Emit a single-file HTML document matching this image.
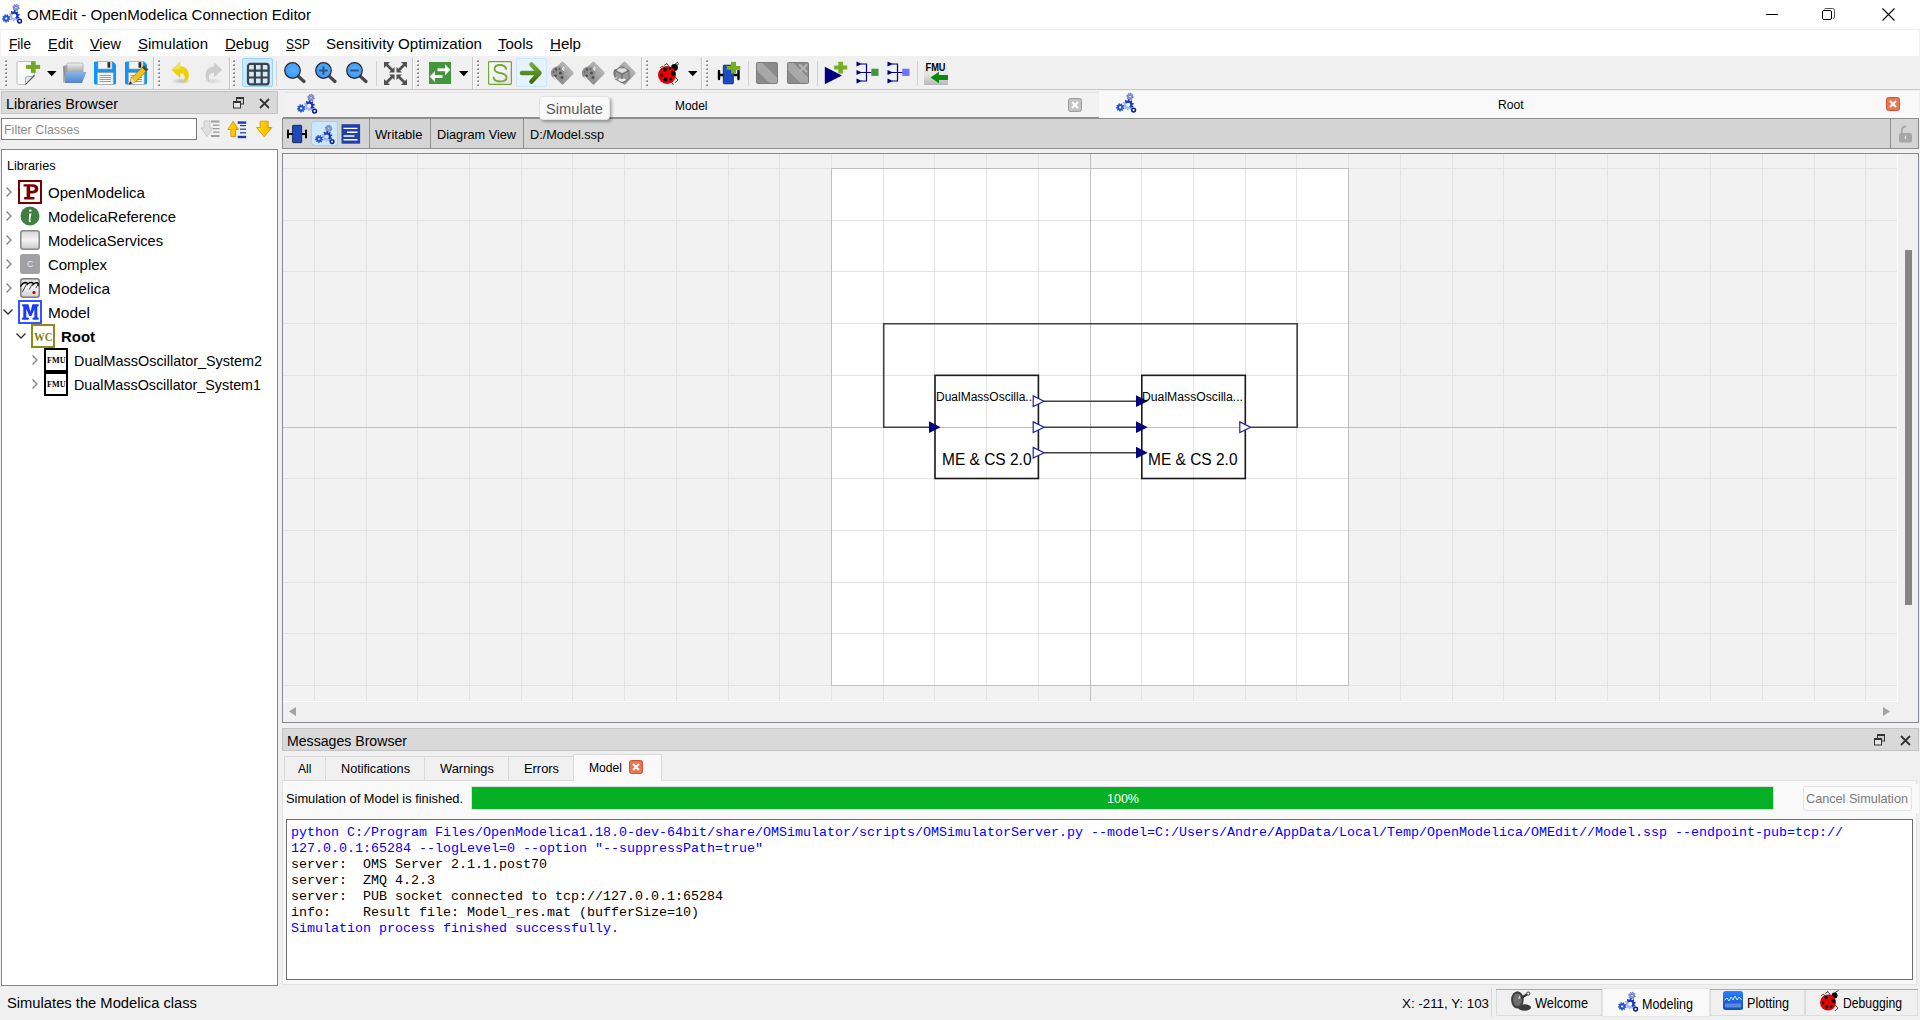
<!DOCTYPE html>
<html><head><meta charset="utf-8"><title>OMEdit - OpenModelica Connection Editor</title>
<style>
html,body{margin:0;padding:0;width:1920px;height:1020px;overflow:hidden;background:#f0f0f0;}
.a{position:absolute;box-sizing:border-box;}
.t{white-space:pre;}
svg.a{overflow:visible}
</style></head><body>
<div class="a" style="left:0px;top:0px;width:1920px;height:29px;background:#ffffff;"></div><div class="a t" style="left:27px;top:7.10px;font-family:'Liberation Sans';font-size:15px;line-height:15px;color:#000;font-weight:normal;transform:scaleX(1.0018);transform-origin:0 0;">OMEdit - OpenModelica Connection Editor</div><svg class="a" style="left:1765px;top:8px;" width="14" height="14" viewBox="0 0 14 14"><line x1="1" y1="6.5" x2="13" y2="6.5" stroke="#000" stroke-width="1"/></svg><svg class="a" style="left:1822px;top:8px;" width="14" height="14" viewBox="0 0 14 14"><rect x="0.5" y="2.5" width="9" height="9" rx="1.5" fill="none" stroke="#000"/><path d="M2.5 1.5 Q2.5 0.5 4 0.5 H10.5 Q12.5 0.5 12.5 2.5 V9 Q12.5 10.5 11 10.5" fill="none" stroke="#555"/></svg><svg class="a" style="left:1882px;top:8px;" width="14" height="14" viewBox="0 0 14 14"><path d="M0.5 0.5 L12.5 12.5 M12.5 0.5 L0.5 12.5" stroke="#000" stroke-width="1.1"/></svg><div class="a" style="left:0px;top:29px;width:1920px;height:1px;background:#f0f0f0;"></div><div class="a" style="left:1px;top:30px;width:1918px;height:26px;background:#ffffff;"></div><div class="a t" style="left:9px;top:36.10px;font-family:'Liberation Sans';font-size:15px;line-height:15px;color:#000;font-weight:normal;transform:scaleX(0.9101);transform-origin:0 0;">File</div><div class="a t" style="left:48px;top:36.10px;font-family:'Liberation Sans';font-size:15px;line-height:15px;color:#000;font-weight:normal;transform:scaleX(0.9668);transform-origin:0 0;">Edit</div><div class="a t" style="left:90px;top:36.10px;font-family:'Liberation Sans';font-size:15px;line-height:15px;color:#000;font-weight:normal;transform:scaleX(0.9612);transform-origin:0 0;">View</div><div class="a t" style="left:138px;top:36.10px;font-family:'Liberation Sans';font-size:15px;line-height:15px;color:#000;font-weight:normal;transform:scaleX(0.9993);transform-origin:0 0;">Simulation</div><div class="a t" style="left:225px;top:36.10px;font-family:'Liberation Sans';font-size:15px;line-height:15px;color:#000;font-weight:normal;transform:scaleX(0.9954);transform-origin:0 0;">Debug</div><div class="a t" style="left:286px;top:36.10px;font-family:'Liberation Sans';font-size:15px;line-height:15px;color:#000;font-weight:normal;transform:scaleX(0.7996);transform-origin:0 0;">SSP</div><div class="a t" style="left:326px;top:36.10px;font-family:'Liberation Sans';font-size:15px;line-height:15px;color:#000;font-weight:normal;transform:scaleX(1.0060);transform-origin:0 0;">Sensitivity Optimization</div><div class="a t" style="left:498px;top:36.10px;font-family:'Liberation Sans';font-size:15px;line-height:15px;color:#000;font-weight:normal;transform:scaleX(0.9991);transform-origin:0 0;">Tools</div><div class="a t" style="left:550px;top:36.10px;font-family:'Liberation Sans';font-size:15px;line-height:15px;color:#000;font-weight:normal;transform:scaleX(1.0046);transform-origin:0 0;">Help</div><div class="a" style="left:9px;top:50px;width:8px;height:1px;background:#000;"></div><div class="a" style="left:48px;top:50px;width:9px;height:1px;background:#000;"></div><div class="a" style="left:90px;top:50px;width:10px;height:1px;background:#000;"></div><div class="a" style="left:138px;top:50px;width:9px;height:1px;background:#000;"></div><div class="a" style="left:225px;top:50px;width:11px;height:1px;background:#000;"></div><div class="a" style="left:286px;top:50px;width:9px;height:1px;background:#000;"></div><div class="a" style="left:498px;top:50px;width:7px;height:1px;background:#000;"></div><div class="a" style="left:550px;top:50px;width:11px;height:1px;background:#000;"></div><div class="a" style="left:0px;top:56px;width:1920px;height:33px;background:#f0f0f0;"></div><div class="a" style="left:0px;top:89px;width:1920px;height:1px;background:#c9c9c9;"></div><div class="a" style="left:1px;top:91px;width:277px;height:23px;background:#d9d9d9;box-shadow:inset 0 0 0 1px #c3c3c3;"></div><div class="a t" style="left:6px;top:96.96px;font-family:'Liberation Sans';font-size:14px;line-height:14px;color:#000;font-weight:normal;transform:scaleX(1.0281);transform-origin:0 0;">Libraries Browser</div><div class="a" style="left:1px;top:118px;width:196px;height:22px;background:#ffffff;box-shadow:inset 0 0 0 1px #7a7a7a;"></div><div class="a t" style="left:4px;top:122.82px;font-family:'Liberation Sans';font-size:13px;line-height:13px;color:#8c8c8c;font-weight:normal;transform:scaleX(0.9587);transform-origin:0 0;">Filter Classes</div><div class="a" style="left:1px;top:149px;width:277px;height:837px;background:#ffffff;box-shadow:inset 0 0 0 1px #828790;"></div><div class="a t" style="left:7px;top:158.82px;font-family:'Liberation Sans';font-size:13px;line-height:13px;color:#000;font-weight:normal;transform:scaleX(0.9727);transform-origin:0 0;">Libraries</div><div class="a" style="left:285px;top:92px;width:814px;height:26px;background:#f2f2f2;"></div><div class="a" style="left:285px;top:92px;width:814px;height:1px;background:#e3e3e3;"></div><div class="a" style="left:1099px;top:91px;width:820px;height:27px;background:#f9f9f9;"></div><div class="a" style="left:283px;top:117px;width:816px;height:1px;background:#8c8c8c;"></div><div class="a t" style="left:675px;top:98.82px;font-family:'Liberation Sans';font-size:13px;line-height:13px;color:#000;font-weight:normal;transform:scaleX(0.9175);transform-origin:0 0;">Model</div><div class="a t" style="left:1498px;top:97.82px;font-family:'Liberation Sans';font-size:13px;line-height:13px;color:#000;font-weight:normal;transform:scaleX(0.9320);transform-origin:0 0;">Root</div><div class="a" style="left:282px;top:118px;width:1637px;height:31px;background:#d4d4d4;box-shadow:inset 0 0 0 1px #8f8f8f;"></div><div class="a" style="left:282px;top:153px;width:1637px;height:570px;background:#f0f0f0;box-shadow:inset 0 0 0 1px #858a94;"></div><div class="a" style="left:282px;top:728px;width:1637px;height:23px;background:#d9d9d9;box-shadow:inset 0 0 0 1px #c3c3c3;"></div><div class="a t" style="left:287px;top:733.96px;font-family:'Liberation Sans';font-size:14px;line-height:14px;color:#000;font-weight:normal;transform:scaleX(1.0080);transform-origin:0 0;">Messages Browser</div><div class="a" style="left:282px;top:780px;width:1635px;height:205px;background:#f9f9f9;box-shadow:inset 0 0 0 1px #e3e3e3;"></div><div class="a" style="left:286px;top:819px;width:1627px;height:161px;background:#ffffff;box-shadow:inset 0 0 0 1px #6d6d6d;"></div><div class="a t" style="left:7px;top:995.96px;font-family:'Liberation Sans';font-size:14px;line-height:14px;color:#000;font-weight:normal;transform:scaleX(1.0524);transform-origin:0 0;">Simulates the Modelica class</div><div class="a t" style="left:1402px;top:996.82px;font-family:'Liberation Sans';font-size:13px;line-height:13px;color:#000;font-weight:normal;transform:scaleX(1.0258);transform-origin:0 0;">X: -211, Y: 103</div><svg class="a" style="left:0px;top:0px;pointer-events:none" width="1920" height="1020" viewBox="0 0 1920 1020"><defs><clipPath id="cv"><rect x="283" y="154" width="1615" height="548"/></clipPath></defs><g clip-path="url(#cv)"><rect x="283" y="154" width="1615" height="548" fill="#f2f2f2"/><rect x="831" y="168" width="517" height="517" fill="#ffffff"/><rect x="314" y="154" width="1" height="548" fill="#e3e3e3"/><rect x="366" y="154" width="1" height="548" fill="#e3e3e3"/><rect x="417" y="154" width="1" height="548" fill="#e3e3e3"/><rect x="469" y="154" width="1" height="548" fill="#e3e3e3"/><rect x="521" y="154" width="1" height="548" fill="#e3e3e3"/><rect x="572" y="154" width="1" height="548" fill="#e3e3e3"/><rect x="624" y="154" width="1" height="548" fill="#e3e3e3"/><rect x="676" y="154" width="1" height="548" fill="#e3e3e3"/><rect x="728" y="154" width="1" height="548" fill="#e3e3e3"/><rect x="779" y="154" width="1" height="548" fill="#e3e3e3"/><rect x="831" y="154" width="1" height="548" fill="#e3e3e3"/><rect x="883" y="154" width="1" height="548" fill="#e3e3e3"/><rect x="934" y="154" width="1" height="548" fill="#e3e3e3"/><rect x="986" y="154" width="1" height="548" fill="#e3e3e3"/><rect x="1038" y="154" width="1" height="548" fill="#e3e3e3"/><rect x="1090" y="154" width="1" height="548" fill="#c0c0c0"/><rect x="1141" y="154" width="1" height="548" fill="#e3e3e3"/><rect x="1193" y="154" width="1" height="548" fill="#e3e3e3"/><rect x="1245" y="154" width="1" height="548" fill="#e3e3e3"/><rect x="1296" y="154" width="1" height="548" fill="#e3e3e3"/><rect x="1348" y="154" width="1" height="548" fill="#e3e3e3"/><rect x="1400" y="154" width="1" height="548" fill="#e3e3e3"/><rect x="1452" y="154" width="1" height="548" fill="#e3e3e3"/><rect x="1503" y="154" width="1" height="548" fill="#e3e3e3"/><rect x="1555" y="154" width="1" height="548" fill="#e3e3e3"/><rect x="1607" y="154" width="1" height="548" fill="#e3e3e3"/><rect x="1659" y="154" width="1" height="548" fill="#e3e3e3"/><rect x="1710" y="154" width="1" height="548" fill="#e3e3e3"/><rect x="1762" y="154" width="1" height="548" fill="#e3e3e3"/><rect x="1814" y="154" width="1" height="548" fill="#e3e3e3"/><rect x="1865" y="154" width="1" height="548" fill="#e3e3e3"/><rect x="283" y="168" width="1615" height="1" fill="#e3e3e3"/><rect x="283" y="220" width="1615" height="1" fill="#e3e3e3"/><rect x="283" y="271" width="1615" height="1" fill="#e3e3e3"/><rect x="283" y="323" width="1615" height="1" fill="#e3e3e3"/><rect x="283" y="375" width="1615" height="1" fill="#e3e3e3"/><rect x="283" y="427" width="1615" height="1" fill="#c0c0c0"/><rect x="283" y="478" width="1615" height="1" fill="#e3e3e3"/><rect x="283" y="530" width="1615" height="1" fill="#e3e3e3"/><rect x="283" y="582" width="1615" height="1" fill="#e3e3e3"/><rect x="283" y="633" width="1615" height="1" fill="#e3e3e3"/><rect x="283" y="685" width="1615" height="1" fill="#e3e3e3"/><rect x="831.5" y="168.5" width="517" height="517" fill="none" stroke="#c0c0c0" stroke-width="1"/><rect x="1090" y="168" width="1" height="518" fill="#c0c0c0"/><rect x="831" y="427" width="518" height="1" fill="#c0c0c0"/><polyline points="929,427.2 883.7,427.2 883.7,323.7 1297.2,323.7 1297.2,427.2 1250.5,427.2" fill="none" stroke="#404040" stroke-width="1.6" stroke-linejoin="miter"/><polyline points="1044,401.2 1136,401.2" fill="none" stroke="#404040" stroke-width="1.6" stroke-linejoin="miter"/><polyline points="1044,427.2 1136,427.2" fill="none" stroke="#404040" stroke-width="1.6" stroke-linejoin="miter"/><polyline points="1044,452.7 1136,452.7" fill="none" stroke="#404040" stroke-width="1.6" stroke-linejoin="miter"/><rect x="935" y="375.35" width="103.4" height="103.15" fill="#ffffff" fill-opacity="0" stroke="#1a1a1a" stroke-width="1.6"/><rect x="1141.8" y="375.35" width="103.5" height="103.15" fill="#ffffff" fill-opacity="0" stroke="#1a1a1a" stroke-width="1.6"/><path d="M929.0,421.3 L940.6999999999999,427.2 L929.0,433.09999999999997 Z" fill="#000080"/><path d="M1033.2,395.9 L1044.0,401.2 L1033.2,406.5 Z" fill="#ffffff" stroke="#2020a0" stroke-width="1.2"/><path d="M1136.0,395.3 L1147.7,401.2 L1136.0,407.09999999999997 Z" fill="#000080"/><path d="M1033.2,421.9 L1044.0,427.2 L1033.2,432.5 Z" fill="#ffffff" stroke="#2020a0" stroke-width="1.2"/><path d="M1136.0,421.3 L1147.7,427.2 L1136.0,433.09999999999997 Z" fill="#000080"/><path d="M1033.2,447.4 L1044.0,452.7 L1033.2,458.0 Z" fill="#ffffff" stroke="#2020a0" stroke-width="1.2"/><path d="M1136.0,446.8 L1147.7,452.7 L1136.0,458.59999999999997 Z" fill="#000080"/><path d="M1239.8,421.9 L1250.6,427.2 L1239.8,432.5 Z" fill="#ffffff" stroke="#2020a0" stroke-width="1.2"/></g></svg><div class="a t" style="left:936px;top:390.68px;font-family:'Liberation Sans';font-size:12px;line-height:12px;color:#000;font-weight:normal;transform:scaleX(0.9997);transform-origin:0 0;">DualMassOscilla..</div><div class="a t" style="left:1142px;top:390.68px;font-family:'Liberation Sans';font-size:12px;line-height:12px;color:#000;font-weight:normal;transform:scaleX(1.0165);transform-origin:0 0;">DualMassOscilla...</div><div class="a t" style="left:941.5px;top:452.24px;font-family:'Liberation Sans';font-size:16px;line-height:16px;color:#000;font-weight:normal;transform:scaleX(0.9677);transform-origin:0 0;">ME &amp; CS 2.0</div><div class="a t" style="left:1147.5px;top:452.24px;font-family:'Liberation Sans';font-size:16px;line-height:16px;color:#000;font-weight:normal;transform:scaleX(0.9677);transform-origin:0 0;">ME &amp; CS 2.0</div><div class="a" style="left:283px;top:701px;width:1615px;height:1px;background:#ffffff;"></div><div class="a" style="left:283px;top:702px;width:1635px;height:20px;background:#f0f0f0;"></div><svg class="a" style="left:289px;top:707px;" width="8" height="10" viewBox="0 0 8 10"><path d="M7 0 L0 4.5 L7 9 Z" fill="#a3a3a3"/></svg><svg class="a" style="left:1883px;top:707px;" width="8" height="10" viewBox="0 0 8 10"><path d="M0 0 L7 4.5 L0 9 Z" fill="#a3a3a3"/></svg><div class="a" style="left:1897px;top:154px;width:1px;height:548px;background:#ffffff;"></div><div class="a" style="left:1898px;top:154px;width:20px;height:548px;background:#f0f0f0;"></div><div class="a" style="left:1905px;top:250px;width:7px;height:355px;background:#858585;"></div><div class="a" style="left:284px;top:756px;width:290px;height:25px;background:#f0f0f0;box-shadow:inset 0 0 0 1px #d9d9d9;"></div><div class="a" style="left:325px;top:757px;width:1px;height:23px;background:#d9d9d9;"></div><div class="a" style="left:424px;top:757px;width:1px;height:23px;background:#d9d9d9;"></div><div class="a" style="left:508px;top:757px;width:1px;height:23px;background:#d9d9d9;"></div><div class="a" style="left:573px;top:754px;width:89px;height:27px;background:#f9f9f9;box-shadow:inset 0 0 0 1px #d9d9d9;"></div><div class="a" style="left:574px;top:780px;width:87px;height:2px;background:#f9f9f9;"></div><div class="a t" style="left:298px;top:761.82px;font-family:'Liberation Sans';font-size:13px;line-height:13px;color:#000;font-weight:normal;transform:scaleX(0.9341);transform-origin:0 0;">All</div><div class="a t" style="left:341px;top:761.82px;font-family:'Liberation Sans';font-size:13px;line-height:13px;color:#000;font-weight:normal;transform:scaleX(0.9744);transform-origin:0 0;">Notifications</div><div class="a t" style="left:440px;top:761.82px;font-family:'Liberation Sans';font-size:13px;line-height:13px;color:#000;font-weight:normal;transform:scaleX(0.9920);transform-origin:0 0;">Warnings</div><div class="a t" style="left:524px;top:761.82px;font-family:'Liberation Sans';font-size:13px;line-height:13px;color:#000;font-weight:normal;transform:scaleX(0.9890);transform-origin:0 0;">Errors</div><div class="a t" style="left:589px;top:760.82px;font-family:'Liberation Sans';font-size:13px;line-height:13px;color:#000;font-weight:normal;transform:scaleX(0.9316);transform-origin:0 0;">Model</div><svg class="a" style="left:629px;top:760px;" width="14" height="14" viewBox="0 0 14 14"><rect x="0.5" y="0.5" width="13" height="13" rx="2" fill="#e8764f" stroke="#d0503a"/><path d="M4 4 L10 10 M10 4 L4 10" stroke="#fff" stroke-width="2"/></svg><div class="a t" style="left:286px;top:791.82px;font-family:'Liberation Sans';font-size:13px;line-height:13px;color:#000;font-weight:normal;transform:scaleX(0.9877);transform-origin:0 0;">Simulation of Model is finished.</div><div class="a" style="left:471px;top:786px;width:1303px;height:24px;background:#06b025;box-shadow:inset 0 0 0 1px #e0dce0;"></div><div class="a t" style="left:1107px;top:792.68px;font-family:'Liberation Sans';font-size:12px;line-height:12px;color:#fff;font-weight:normal;transform:scaleX(1.0422);transform-origin:0 0;">100%</div><div class="a" style="left:1789px;top:784px;width:130px;height:29px;background:#f9f9f9;"></div><div class="a" style="left:1803px;top:786px;width:109px;height:25px;background:#fbfbfb;border:1px solid #e3e3e3;border-radius:3px;"></div><div class="a t" style="left:1806px;top:791.82px;font-family:'Liberation Sans';font-size:13px;line-height:13px;color:#7a7a7a;font-weight:normal;transform:scaleX(0.9735);transform-origin:0 0;">Cancel Simulation</div><div class="a t" style="left:291px;top:826.04px;font-family:'Liberation Mono';font-size:13.33px;line-height:13.33px;color:#0000ff;font-weight:normal;transform:scaleX(1.0002);transform-origin:0 0;">python C:/Program Files/OpenModelica1.18.0-dev-64bit/share/OMSimulator/scripts/OMSimulatorServer.py --model=C:/Users/Andre/AppData/Local/Temp/OpenModelica/OMEdit//Model.ssp --endpoint-pub=tcp://</div><div class="a t" style="left:291px;top:842.04px;font-family:'Liberation Mono';font-size:13.33px;line-height:13.33px;color:#0000ff;font-weight:normal;transform:scaleX(1.0002);transform-origin:0 0;">127.0.0.1:65284 --logLevel=0 --option "--suppressPath=true"</div><div class="a t" style="left:291px;top:858.04px;font-family:'Liberation Mono';font-size:13.33px;line-height:13.33px;color:#000;font-weight:normal;transform:scaleX(1.0002);transform-origin:0 0;">server:  OMS Server 2.1.1.post70</div><div class="a t" style="left:291px;top:874.04px;font-family:'Liberation Mono';font-size:13.33px;line-height:13.33px;color:#000;font-weight:normal;transform:scaleX(1.0002);transform-origin:0 0;">server:  ZMQ 4.2.3</div><div class="a t" style="left:291px;top:890.04px;font-family:'Liberation Mono';font-size:13.33px;line-height:13.33px;color:#000;font-weight:normal;transform:scaleX(1.0002);transform-origin:0 0;">server:  PUB socket connected to tcp://127.0.0.1:65284</div><div class="a t" style="left:291px;top:906.04px;font-family:'Liberation Mono';font-size:13.33px;line-height:13.33px;color:#000;font-weight:normal;transform:scaleX(1.0002);transform-origin:0 0;">info:    Result file: Model_res.mat (bufferSize=10)</div><div class="a t" style="left:291px;top:922.04px;font-family:'Liberation Mono';font-size:13.33px;line-height:13.33px;color:#0000ff;font-weight:normal;transform:scaleX(1.0002);transform-origin:0 0;">Simulation process finished successfully.</div><div class="a" style="left:1491px;top:988px;width:1px;height:29px;background:#d9d9d9;"></div><div class="a" style="left:1496px;top:989px;width:106px;height:27px;background:#f0f0f0;box-shadow:inset 0 0 0 1px #dcdcdc;"></div><div class="a" style="left:1496px;top:989px;width:106px;height:1px;background:#a8a8a8;"></div><div class="a" style="left:1602px;top:988px;width:108px;height:29px;background:#f9f9f9;box-shadow:inset 0 0 0 1px #e6e6e6;"></div><div class="a" style="left:1710px;top:989px;width:95px;height:27px;background:#f0f0f0;box-shadow:inset 0 0 0 1px #dcdcdc;"></div><div class="a" style="left:1710px;top:989px;width:208px;height:1px;background:#a8a8a8;"></div><div class="a" style="left:1805px;top:989px;width:113px;height:27px;background:#f0f0f0;box-shadow:inset 0 0 0 1px #dcdcdc;"></div><div class="a" style="left:1805px;top:989px;width:113px;height:1px;background:#a8a8a8;"></div><div class="a t" style="left:1535px;top:995.96px;font-family:'Liberation Sans';font-size:14px;line-height:14px;color:#000;font-weight:normal;transform:scaleX(0.9123);transform-origin:0 0;">Welcome</div><div class="a t" style="left:1642px;top:996.96px;font-family:'Liberation Sans';font-size:14px;line-height:14px;color:#000;font-weight:normal;transform:scaleX(0.8974);transform-origin:0 0;">Modeling</div><div class="a t" style="left:1747px;top:995.96px;font-family:'Liberation Sans';font-size:14px;line-height:14px;color:#000;font-weight:normal;transform:scaleX(0.8993);transform-origin:0 0;">Plotting</div><div class="a t" style="left:1843px;top:995.96px;font-family:'Liberation Sans';font-size:14px;line-height:14px;color:#000;font-weight:normal;transform:scaleX(0.8710);transform-origin:0 0;">Debugging</div><div class="a" style="left:539px;top:96px;width:71px;height:24px;background:#f9f9f9;border:1px solid #e2e2e2;border-radius:4px;box-shadow:2px 2px 3px rgba(0,0,0,0.3);"></div><div class="a t" style="left:545.5px;top:101.10px;font-family:'Liberation Sans';font-size:15px;line-height:15px;color:#575757;font-weight:normal;transform:scaleX(0.9767);transform-origin:0 0;">Simulate</div><svg class="a" style="left:5px;top:186px;" width="8" height="12" viewBox="0 0 8 12"><path d="M1.5 1.5 L6 6 L1.5 10.5" fill="none" stroke="#808080" stroke-width="1.3"/></svg><svg class="a" style="left:5px;top:210px;" width="8" height="12" viewBox="0 0 8 12"><path d="M1.5 1.5 L6 6 L1.5 10.5" fill="none" stroke="#808080" stroke-width="1.3"/></svg><svg class="a" style="left:5px;top:234px;" width="8" height="12" viewBox="0 0 8 12"><path d="M1.5 1.5 L6 6 L1.5 10.5" fill="none" stroke="#808080" stroke-width="1.3"/></svg><svg class="a" style="left:5px;top:258px;" width="8" height="12" viewBox="0 0 8 12"><path d="M1.5 1.5 L6 6 L1.5 10.5" fill="none" stroke="#808080" stroke-width="1.3"/></svg><svg class="a" style="left:5px;top:282px;" width="8" height="12" viewBox="0 0 8 12"><path d="M1.5 1.5 L6 6 L1.5 10.5" fill="none" stroke="#808080" stroke-width="1.3"/></svg><svg class="a" style="left:2px;top:308px;" width="12" height="8" viewBox="0 0 12 8"><path d="M1.5 1.5 L6 6 L10.5 1.5" fill="none" stroke="#303030" stroke-width="1.3"/></svg><svg class="a" style="left:18px;top:180px;" width="24" height="24" viewBox="0 0 24 24"><rect x="1" y="1" width="22" height="22" fill="#fff" stroke="#7a0000" stroke-width="2"/><path fill="#7a0000" fill-rule="evenodd" d="M6.5 4.2 H14.5 Q20.3 4.2 20.3 8.8 Q20.3 13.4 14.5 13.4 H12.2 V17 H15.5 Q16.6 17 16.6 18.2 Q16.6 19.4 15.5 19.4 H7 Q5.9 19.4 5.9 18.2 Q5.9 17 7 17 H8.6 V6.6 H6.5 Q5.4 6.6 5.4 5.4 Q5.4 4.2 6.5 4.2 Z M12.2 6.8 V10.8 H14.4 Q16.9 10.8 16.9 8.8 Q16.9 6.8 14.4 6.8 Z"/></svg><svg class="a" style="left:20px;top:206px;" width="20" height="20" viewBox="0 0 20 20"><circle cx="10" cy="10" r="9.5" fill="#3f7f3f"/><circle cx="10.3" cy="4.6" r="1.2" fill="#fff"/><path d="M9.2 7.5 L11.5 7.5 L10.2 14.2 Q10 15.2 11 14.6 L10.8 16 Q8.6 16.6 8.8 14.8 Z" fill="#fff"/></svg><svg class="a" style="left:20px;top:230px;" width="20" height="20" viewBox="0 0 20 20"><defs><linearGradient id="gms" x1="0" y1="0" x2="0" y2="1"><stop offset="0" stop-color="#d4d4d4"/><stop offset="0.5" stop-color="#f4f4f4"/><stop offset="1" stop-color="#c8c8c8"/></linearGradient></defs><rect x="0.75" y="0.75" width="18.5" height="18.5" rx="2.5" fill="url(#gms)" stroke="#8a8a8a" stroke-width="1.5"/></svg><svg class="a" style="left:20px;top:254px;" width="20" height="20" viewBox="0 0 20 20"><rect x="0" y="0" width="20" height="20" rx="2.5" fill="#a1a1a5"/><text x="10.2" y="13" text-anchor="middle" font-family="Liberation Sans" font-size="8.6" fill="#e6ecf2">C</text></svg><svg class="a" style="left:20px;top:278px;" width="20" height="20" viewBox="0 0 20 20"><defs><linearGradient id="gml" x1="0" y1="0" x2="0" y2="1"><stop offset="0" stop-color="#dcdcdc"/><stop offset="0.45" stop-color="#f4f4f4"/><stop offset="1" stop-color="#d0d0d0"/></linearGradient></defs><rect x="0.75" y="0.75" width="18.5" height="18.5" rx="2.5" fill="url(#gml)" stroke="#7e7e7e" stroke-width="1.5"/><path d="M0.8 8.2 Q3 4.6 5.5 4.6 Q7.5 4.8 7.6 6 Q9.5 4.3 11.5 4.6 Q13.5 4.9 13.3 6.3 Q15.5 4.3 17.5 4.8 Q18.6 5.3 18 7.5" fill="none" stroke="#000" stroke-width="1.5" stroke-linecap="round"/><path d="M6.8 5.8 L2.3 14.2 M12.6 6 L9 11.6 M17.8 7.2 L15.6 10.2" fill="none" stroke="#111" stroke-width="0.8"/><circle cx="14" cy="14.5" r="1.6" fill="#b00000"/></svg><svg class="a" style="left:18px;top:300px;" width="24" height="24" viewBox="0 0 24 24"><rect x="1" y="1" width="22" height="22" fill="#fff" stroke="#1434ff" stroke-width="1.7"/><path fill="#1a3aff" d="M4.9 4.2 H10.4 L12.4 11.8 L14.4 4.2 H19.8 Q20.9 4.2 20.9 5.3 Q20.9 6.4 19.8 6.4 H19.3 V17.5 H19.8 Q20.9 17.5 20.9 18.65 Q20.9 19.8 19.8 19.8 H15.5 Q14.4 19.8 14.4 18.65 Q14.4 17.5 15.5 17.5 H16.4 V9 L13.5 16 H11.3 L8.3 9 V17.5 H9.9 Q11 17.5 11 18.65 Q11 19.8 9.9 19.8 H4.9 Q3.8 19.8 3.8 18.65 Q3.8 17.5 4.9 17.5 H5.3 V6.4 H4.9 Q3.8 6.4 3.8 5.3 Q3.8 4.2 4.9 4.2 Z"/></svg><svg class="a" style="left:15px;top:332px;" width="12" height="8" viewBox="0 0 12 8"><path d="M1.5 1.5 L6 6 L10.5 1.5" fill="none" stroke="#303030" stroke-width="1.3"/></svg><svg class="a" style="left:31px;top:324px;" width="24" height="24" viewBox="0 0 24 24"><rect x="1" y="1" width="22" height="22" fill="#fff" stroke="#8c8c1e" stroke-width="2"/><text x="3" y="16.5" textLength="18.5" lengthAdjust="spacingAndGlyphs" font-family="Liberation Serif" font-weight="bold" font-size="11.5" fill="#808016">WC</text></svg><svg class="a" style="left:31px;top:354px;" width="8" height="12" viewBox="0 0 8 12"><path d="M1.5 1.5 L6 6 L1.5 10.5" fill="none" stroke="#808080" stroke-width="1.3"/></svg><svg class="a" style="left:44px;top:348px;" width="24" height="24" viewBox="0 0 24 24"><rect x="1" y="1" width="22" height="22" fill="#fff" stroke="#000" stroke-width="2"/><text x="3" y="15" textLength="18.5" lengthAdjust="spacingAndGlyphs" font-family="Liberation Serif" font-weight="bold" font-size="8.5" fill="#000">FMU</text></svg><svg class="a" style="left:31px;top:378px;" width="8" height="12" viewBox="0 0 8 12"><path d="M1.5 1.5 L6 6 L1.5 10.5" fill="none" stroke="#808080" stroke-width="1.3"/></svg><svg class="a" style="left:44px;top:372px;" width="24" height="24" viewBox="0 0 24 24"><rect x="1" y="1" width="22" height="22" fill="#fff" stroke="#000" stroke-width="2"/><text x="3" y="15" textLength="18.5" lengthAdjust="spacingAndGlyphs" font-family="Liberation Serif" font-weight="bold" font-size="8.5" fill="#000">FMU</text></svg><div class="a t" style="left:48px;top:185.10px;font-family:'Liberation Sans';font-size:15px;line-height:15px;color:#000;font-weight:normal;transform:scaleX(1.0027);transform-origin:0 0;">OpenModelica</div><div class="a t" style="left:48px;top:209.10px;font-family:'Liberation Sans';font-size:15px;line-height:15px;color:#000;font-weight:normal;transform:scaleX(0.9903);transform-origin:0 0;">ModelicaReference</div><div class="a t" style="left:48px;top:233.10px;font-family:'Liberation Sans';font-size:15px;line-height:15px;color:#000;font-weight:normal;transform:scaleX(0.9783);transform-origin:0 0;">ModelicaServices</div><div class="a t" style="left:48px;top:257.10px;font-family:'Liberation Sans';font-size:15px;line-height:15px;color:#000;font-weight:normal;transform:scaleX(0.9968);transform-origin:0 0;">Complex</div><div class="a t" style="left:48px;top:281.10px;font-family:'Liberation Sans';font-size:15px;line-height:15px;color:#000;font-weight:normal;transform:scaleX(1.0328);transform-origin:0 0;">Modelica</div><div class="a t" style="left:48px;top:305.10px;font-family:'Liberation Sans';font-size:15px;line-height:15px;color:#000;font-weight:normal;transform:scaleX(1.0279);transform-origin:0 0;">Model</div><div class="a t" style="left:61px;top:329.10px;font-family:'Liberation Sans';font-size:15px;line-height:15px;color:#000;font-weight:bold;transform:scaleX(0.9954);transform-origin:0 0;">Root</div><div class="a t" style="left:74px;top:353.10px;font-family:'Liberation Sans';font-size:15px;line-height:15px;color:#000;font-weight:normal;transform:scaleX(0.9596);transform-origin:0 0;">DualMassOscillator_System2</div><div class="a t" style="left:74px;top:377.10px;font-family:'Liberation Sans';font-size:15px;line-height:15px;color:#000;font-weight:normal;transform:scaleX(0.9545);transform-origin:0 0;">DualMassOscillator_System1</div><svg class="a" style="left:4px;top:56px;" width="4" height="32" viewBox="0 0 4 32"><rect x="1" y="4" width="1" height="1" fill="#c4c4c4"/><rect x="2" y="4" width="1" height="1" fill="#a0a0a0"/><rect x="1" y="5" width="2" height="1" fill="#8c8c8c"/><rect x="0" y="3" width="2" height="1" fill="#ffffff" opacity="0.7"/><rect x="1" y="8" width="1" height="1" fill="#c4c4c4"/><rect x="2" y="8" width="1" height="1" fill="#a0a0a0"/><rect x="1" y="9" width="2" height="1" fill="#8c8c8c"/><rect x="0" y="7" width="2" height="1" fill="#ffffff" opacity="0.7"/><rect x="1" y="12" width="1" height="1" fill="#c4c4c4"/><rect x="2" y="12" width="1" height="1" fill="#a0a0a0"/><rect x="1" y="13" width="2" height="1" fill="#8c8c8c"/><rect x="0" y="11" width="2" height="1" fill="#ffffff" opacity="0.7"/><rect x="1" y="16" width="1" height="1" fill="#c4c4c4"/><rect x="2" y="16" width="1" height="1" fill="#a0a0a0"/><rect x="1" y="17" width="2" height="1" fill="#8c8c8c"/><rect x="0" y="15" width="2" height="1" fill="#ffffff" opacity="0.7"/><rect x="1" y="20" width="1" height="1" fill="#c4c4c4"/><rect x="2" y="20" width="1" height="1" fill="#a0a0a0"/><rect x="1" y="21" width="2" height="1" fill="#8c8c8c"/><rect x="0" y="19" width="2" height="1" fill="#ffffff" opacity="0.7"/><rect x="1" y="24" width="1" height="1" fill="#c4c4c4"/><rect x="2" y="24" width="1" height="1" fill="#a0a0a0"/><rect x="1" y="25" width="2" height="1" fill="#8c8c8c"/><rect x="0" y="23" width="2" height="1" fill="#ffffff" opacity="0.7"/><rect x="1" y="28" width="1" height="1" fill="#c4c4c4"/><rect x="2" y="28" width="1" height="1" fill="#a0a0a0"/><rect x="1" y="29" width="2" height="1" fill="#8c8c8c"/><rect x="0" y="27" width="2" height="1" fill="#ffffff" opacity="0.7"/></svg><svg class="a" style="left:16px;top:60px;" width="26" height="26" viewBox="0 0 26 26"><defs><linearGradient id="gdoc" x1="0" y1="0" x2="1" y2="1"><stop offset="0" stop-color="#ffffff"/><stop offset="1" stop-color="#f2f2f2"/></linearGradient></defs><path d="M2.5 1.5 H17 L18.5 3 V14.5 L9.5 24.5 H2.5 Q1 24.5 1 23 V3 Q1 1.5 2.5 1.5 Z" fill="url(#gdoc)" stroke="#bdbdbd" stroke-width="1"/><path d="M9.5 24.5 V18 Q9.5 16.5 11 16.5 H18.5 Z" fill="#e6e6e6" stroke="#9a9a9a" stroke-width="0.8"/><path d="M9.5 24.5 L18.5 15" stroke="#333" stroke-width="1"/><rect x="15" y="1.2" width="4.7" height="11.7" fill="#73aa24"/><rect x="10" y="4.9" width="14.1" height="4" fill="#73aa24"/></svg><svg class="a" style="left:47px;top:71px;" width="10" height="6" viewBox="0 0 10 6"><path d="M0 0 H9.5 L4.75 5.3 Z" fill="#000"/></svg><svg class="a" style="left:61px;top:62px;" width="27" height="23" viewBox="0 0 27 23"><defs><linearGradient id="gfb" x1="0" y1="0" x2="0" y2="1"><stop offset="0" stop-color="#f2f2f2"/><stop offset="1" stop-color="#a0a0a0"/></linearGradient><linearGradient id="gff" x1="0" y1="0" x2="0" y2="1"><stop offset="0" stop-color="#8ab4e4"/><stop offset="1" stop-color="#4f86cc"/></linearGradient></defs><path d="M2 4 L6 3 V20 L4 20 Z" fill="#9c9c9c"/><path d="M6 2.5 Q6 1 7.5 1 H20.5 Q22 1 22 2.5 V11 H6 Z" fill="url(#gfb)" stroke="#a8a8a8" stroke-width="0.8"/><path d="M5 10 H25.5 L21 21 H4 Z" fill="url(#gff)"/><path d="M3 5 V20.5" stroke="#888" stroke-width="1.2"/></svg><svg class="a" style="left:94px;top:61px;" width="23" height="24" viewBox="0 0 23 24"><path d="M1.5 0.5 H19 L22 3.5 V22 Q22 23.5 20.5 23.5 H1.5 Q0 23.5 0 22 V2 Q0 0.5 1.5 0.5 Z" fill="#0a96ff"/><rect x="4" y="0.5" width="14" height="7.5" fill="#f4f4f4" stroke="#a6a6a6" stroke-width="0.6"/><rect x="13.5" y="1.2" width="2.8" height="5.5" fill="#2b2b2b"/><rect x="3.3" y="11.7" width="15.9" height="11.8" fill="#f7f7f7" stroke="#9e9e9e" stroke-width="0.7"/><path d="M5.5 14.5 H17 M5.5 16.5 H17 M5.5 18.5 H17 M5.5 20.5 H17" stroke="#9a9a9a" stroke-width="1"/></svg><svg class="a" style="left:125px;top:61px;" width="23" height="24" viewBox="0 0 23 24"><path d="M1.5 0.5 H19 L22 3.5 V22 Q22 23.5 20.5 23.5 H1.5 Q0 23.5 0 22 V2 Q0 0.5 1.5 0.5 Z" fill="#0a96ff"/><rect x="4" y="0.5" width="14" height="7.5" fill="#f4f4f4" stroke="#a6a6a6" stroke-width="0.6"/><rect x="13.5" y="1.2" width="2.8" height="5.5" fill="#2b2b2b"/><rect x="3.3" y="11.7" width="15.9" height="11.8" fill="#f7f7f7" stroke="#9e9e9e" stroke-width="0.7"/><path d="M5.5 14.5 H17 M5.5 16.5 H17 M5.5 18.5 H17 M5.5 20.5 H17" stroke="#9a9a9a" stroke-width="1"/><path d="M4 23.5 L6.5 17 L19 4.5 L23 8.5 L10.5 21 Z" fill="#f3c21b" stroke="#5a4a00" stroke-width="0.5"/><path d="M4 23.5 L6.5 17 L10.5 21 Z" fill="#d8d8d8"/><path d="M4 23.5 L5.2 20.3 L7.2 22.3 Z" fill="#222"/><path d="M17 6.5 L19 4.5 L23 8.5 L21 10.5 Z" fill="#444"/></svg><div class="a" style="left:153px;top:57px;width:1px;height:32px;background:#c6c6c6;"></div><div class="a" style="left:154px;top:57px;width:1px;height:32px;background:#ffffff;"></div><svg class="a" style="left:157px;top:56px;" width="4" height="32" viewBox="0 0 4 32"><rect x="1" y="4" width="1" height="1" fill="#c4c4c4"/><rect x="2" y="4" width="1" height="1" fill="#a0a0a0"/><rect x="1" y="5" width="2" height="1" fill="#8c8c8c"/><rect x="0" y="3" width="2" height="1" fill="#ffffff" opacity="0.7"/><rect x="1" y="8" width="1" height="1" fill="#c4c4c4"/><rect x="2" y="8" width="1" height="1" fill="#a0a0a0"/><rect x="1" y="9" width="2" height="1" fill="#8c8c8c"/><rect x="0" y="7" width="2" height="1" fill="#ffffff" opacity="0.7"/><rect x="1" y="12" width="1" height="1" fill="#c4c4c4"/><rect x="2" y="12" width="1" height="1" fill="#a0a0a0"/><rect x="1" y="13" width="2" height="1" fill="#8c8c8c"/><rect x="0" y="11" width="2" height="1" fill="#ffffff" opacity="0.7"/><rect x="1" y="16" width="1" height="1" fill="#c4c4c4"/><rect x="2" y="16" width="1" height="1" fill="#a0a0a0"/><rect x="1" y="17" width="2" height="1" fill="#8c8c8c"/><rect x="0" y="15" width="2" height="1" fill="#ffffff" opacity="0.7"/><rect x="1" y="20" width="1" height="1" fill="#c4c4c4"/><rect x="2" y="20" width="1" height="1" fill="#a0a0a0"/><rect x="1" y="21" width="2" height="1" fill="#8c8c8c"/><rect x="0" y="19" width="2" height="1" fill="#ffffff" opacity="0.7"/><rect x="1" y="24" width="1" height="1" fill="#c4c4c4"/><rect x="2" y="24" width="1" height="1" fill="#a0a0a0"/><rect x="1" y="25" width="2" height="1" fill="#8c8c8c"/><rect x="0" y="23" width="2" height="1" fill="#ffffff" opacity="0.7"/><rect x="1" y="28" width="1" height="1" fill="#c4c4c4"/><rect x="2" y="28" width="1" height="1" fill="#a0a0a0"/><rect x="1" y="29" width="2" height="1" fill="#8c8c8c"/><rect x="0" y="27" width="2" height="1" fill="#ffffff" opacity="0.7"/></svg><svg class="a" style="left:168px;top:60px;" width="26" height="26" viewBox="0 0 26 26"><defs><radialGradient id="gsh"><stop offset="0" stop-color="#000" stop-opacity="0.22"/><stop offset="1" stop-color="#000" stop-opacity="0"/></radialGradient></defs><ellipse cx="13" cy="21" rx="10" ry="3.2" fill="url(#gsh)"/><path d="M3.8 9.8 L12 2.3 V6.5 Q21 7 20.5 16.5 Q20 21 15.5 22.5 Q18 19 16.5 15 Q15 12.5 12 13 V17.5 Z" fill="#ecd400" stroke="#e0c800" stroke-width="0.5"/><path d="M3.8 9.8 L12 2.3 V9 Z" fill="#f2e060"/></svg><svg class="a" style="left:200px;top:60px;" width="26" height="26" viewBox="0 0 26 26"><ellipse cx="13" cy="21" rx="10" ry="3.2" fill="url(#gsh)" opacity="0.5"/><path d="M22.2 9.8 L14 2.3 V6.5 Q5 7 5.5 16.5 Q6 21 10.5 22.5 Q8 19 9.5 15 Q11 12.5 14 13 V17.5 Z" fill="#cdcdcd"/></svg><div class="a" style="left:229px;top:57px;width:1px;height:32px;background:#c6c6c6;"></div><div class="a" style="left:230px;top:57px;width:1px;height:32px;background:#ffffff;"></div><svg class="a" style="left:232px;top:56px;" width="4" height="32" viewBox="0 0 4 32"><rect x="1" y="4" width="1" height="1" fill="#c4c4c4"/><rect x="2" y="4" width="1" height="1" fill="#a0a0a0"/><rect x="1" y="5" width="2" height="1" fill="#8c8c8c"/><rect x="0" y="3" width="2" height="1" fill="#ffffff" opacity="0.7"/><rect x="1" y="8" width="1" height="1" fill="#c4c4c4"/><rect x="2" y="8" width="1" height="1" fill="#a0a0a0"/><rect x="1" y="9" width="2" height="1" fill="#8c8c8c"/><rect x="0" y="7" width="2" height="1" fill="#ffffff" opacity="0.7"/><rect x="1" y="12" width="1" height="1" fill="#c4c4c4"/><rect x="2" y="12" width="1" height="1" fill="#a0a0a0"/><rect x="1" y="13" width="2" height="1" fill="#8c8c8c"/><rect x="0" y="11" width="2" height="1" fill="#ffffff" opacity="0.7"/><rect x="1" y="16" width="1" height="1" fill="#c4c4c4"/><rect x="2" y="16" width="1" height="1" fill="#a0a0a0"/><rect x="1" y="17" width="2" height="1" fill="#8c8c8c"/><rect x="0" y="15" width="2" height="1" fill="#ffffff" opacity="0.7"/><rect x="1" y="20" width="1" height="1" fill="#c4c4c4"/><rect x="2" y="20" width="1" height="1" fill="#a0a0a0"/><rect x="1" y="21" width="2" height="1" fill="#8c8c8c"/><rect x="0" y="19" width="2" height="1" fill="#ffffff" opacity="0.7"/><rect x="1" y="24" width="1" height="1" fill="#c4c4c4"/><rect x="2" y="24" width="1" height="1" fill="#a0a0a0"/><rect x="1" y="25" width="2" height="1" fill="#8c8c8c"/><rect x="0" y="23" width="2" height="1" fill="#ffffff" opacity="0.7"/><rect x="1" y="28" width="1" height="1" fill="#c4c4c4"/><rect x="2" y="28" width="1" height="1" fill="#a0a0a0"/><rect x="1" y="29" width="2" height="1" fill="#8c8c8c"/><rect x="0" y="27" width="2" height="1" fill="#ffffff" opacity="0.7"/></svg><div class="a" style="left:242px;top:58px;width:31px;height:29px;background:#cce8ff;border:1px solid #99d1ff;border-radius:2px;"></div><svg class="a" style="left:246px;top:62px;" width="24" height="24" viewBox="0 0 24 24"><rect x="2" y="1.8" width="20.6" height="20.6" rx="2.5" fill="#d0ecfc" stroke="#3b4249" stroke-width="2.2"/><path d="M8.9 2 V22 M15.7 2 V22 M2 8.7 H22.5 M2 15.5 H22.5" stroke="#3b4249" stroke-width="2.2"/></svg><div class="a" style="left:276px;top:61px;width:1px;height:25px;background:#d2d2d2;"></div><svg class="a" style="left:284px;top:62px;" width="24" height="24" viewBox="0 0 24 24"><defs><radialGradient id="gmg" cx="0.55" cy="0.45" r="0.6"><stop offset="0" stop-color="#5ab0ff"/><stop offset="0.7" stop-color="#40a0ff"/><stop offset="1" stop-color="#1a7ee8"/></radialGradient></defs><path d="M14.5 14.5 L20 19.5" stroke="#454545" stroke-width="3.2" stroke-linecap="round"/><circle cx="8.5" cy="8.5" r="7.8" fill="url(#gmg)" stroke="#2e2a28" stroke-width="1.2"/></svg><svg class="a" style="left:315px;top:62px;" width="24" height="24" viewBox="0 0 24 24"><defs><radialGradient id="gmg" cx="0.55" cy="0.45" r="0.6"><stop offset="0" stop-color="#5ab0ff"/><stop offset="0.7" stop-color="#40a0ff"/><stop offset="1" stop-color="#1a7ee8"/></radialGradient></defs><path d="M14.5 14.5 L20 19.5" stroke="#454545" stroke-width="3.2" stroke-linecap="round"/><circle cx="8.5" cy="8.5" r="7.8" fill="url(#gmg)" stroke="#2e2a28" stroke-width="1.2"/><path d="M8.5 4.2 V12.8 M4.2 8.5 H12.8" stroke="#3a5070" stroke-width="2"/></svg><svg class="a" style="left:346px;top:62px;" width="24" height="24" viewBox="0 0 24 24"><defs><radialGradient id="gmg" cx="0.55" cy="0.45" r="0.6"><stop offset="0" stop-color="#5ab0ff"/><stop offset="0.7" stop-color="#40a0ff"/><stop offset="1" stop-color="#1a7ee8"/></radialGradient></defs><path d="M14.5 14.5 L20 19.5" stroke="#454545" stroke-width="3.2" stroke-linecap="round"/><circle cx="8.5" cy="8.5" r="7.8" fill="url(#gmg)" stroke="#2e2a28" stroke-width="1.2"/><path d="M4.2 8.5 H12.8" stroke="#3a5070" stroke-width="2"/></svg><div class="a" style="left:376px;top:61px;width:1px;height:25px;background:#d2d2d2;"></div><svg class="a" style="left:384px;top:62px;" width="23" height="23" viewBox="0 0 23 23"><g stroke="#505050" stroke-width="2.6" fill="none"><path d="M1.5 1.5 L9 9"/><path d="M21.5 1.5 L14 9"/><path d="M1.5 21.5 L9 14"/><path d="M21.5 21.5 L14 14"/></g><g fill="#505050"><path d="M5 10.5 H10.5 V5 Z"/><path d="M18 10.5 H12.5 V5 Z"/><path d="M5 12.5 H10.5 V18 Z"/><path d="M18 12.5 H12.5 V18 Z"/><path d="M0 0 H6 L0 6 Z"/><path d="M23 0 H17 L23 6 Z"/><path d="M0 23 H6 L0 17 Z"/><path d="M23 23 H17 L23 17 Z"/></g></svg><div class="a" style="left:412px;top:57px;width:1px;height:32px;background:#c6c6c6;"></div><div class="a" style="left:413px;top:57px;width:1px;height:32px;background:#ffffff;"></div><svg class="a" style="left:416px;top:56px;" width="4" height="32" viewBox="0 0 4 32"><rect x="1" y="4" width="1" height="1" fill="#c4c4c4"/><rect x="2" y="4" width="1" height="1" fill="#a0a0a0"/><rect x="1" y="5" width="2" height="1" fill="#8c8c8c"/><rect x="0" y="3" width="2" height="1" fill="#ffffff" opacity="0.7"/><rect x="1" y="8" width="1" height="1" fill="#c4c4c4"/><rect x="2" y="8" width="1" height="1" fill="#a0a0a0"/><rect x="1" y="9" width="2" height="1" fill="#8c8c8c"/><rect x="0" y="7" width="2" height="1" fill="#ffffff" opacity="0.7"/><rect x="1" y="12" width="1" height="1" fill="#c4c4c4"/><rect x="2" y="12" width="1" height="1" fill="#a0a0a0"/><rect x="1" y="13" width="2" height="1" fill="#8c8c8c"/><rect x="0" y="11" width="2" height="1" fill="#ffffff" opacity="0.7"/><rect x="1" y="16" width="1" height="1" fill="#c4c4c4"/><rect x="2" y="16" width="1" height="1" fill="#a0a0a0"/><rect x="1" y="17" width="2" height="1" fill="#8c8c8c"/><rect x="0" y="15" width="2" height="1" fill="#ffffff" opacity="0.7"/><rect x="1" y="20" width="1" height="1" fill="#c4c4c4"/><rect x="2" y="20" width="1" height="1" fill="#a0a0a0"/><rect x="1" y="21" width="2" height="1" fill="#8c8c8c"/><rect x="0" y="19" width="2" height="1" fill="#ffffff" opacity="0.7"/><rect x="1" y="24" width="1" height="1" fill="#c4c4c4"/><rect x="2" y="24" width="1" height="1" fill="#a0a0a0"/><rect x="1" y="25" width="2" height="1" fill="#8c8c8c"/><rect x="0" y="23" width="2" height="1" fill="#ffffff" opacity="0.7"/><rect x="1" y="28" width="1" height="1" fill="#c4c4c4"/><rect x="2" y="28" width="1" height="1" fill="#a0a0a0"/><rect x="1" y="29" width="2" height="1" fill="#8c8c8c"/><rect x="0" y="27" width="2" height="1" fill="#ffffff" opacity="0.7"/></svg><svg class="a" style="left:429px;top:62px;" width="22" height="22" viewBox="0 0 22 22"><rect x="0" y="0" width="22" height="22" fill="#43963c"/><g fill="#fff"><rect x="8.5" y="6.4" width="9" height="2.8"/><path d="M16 2.2 L21.2 7.8 L16 13.4 Z"/><rect x="4.5" y="13.2" width="9" height="2.8"/><path d="M6 9 L0.8 14.6 L6 20.2 Z"/></g></svg><svg class="a" style="left:459px;top:71px;" width="10" height="6" viewBox="0 0 10 6"><path d="M0 0 H9.5 L4.75 5.3 Z" fill="#000"/></svg><div class="a" style="left:472px;top:57px;width:1px;height:32px;background:#c6c6c6;"></div><div class="a" style="left:473px;top:57px;width:1px;height:32px;background:#ffffff;"></div><svg class="a" style="left:476px;top:56px;" width="4" height="32" viewBox="0 0 4 32"><rect x="1" y="4" width="1" height="1" fill="#c4c4c4"/><rect x="2" y="4" width="1" height="1" fill="#a0a0a0"/><rect x="1" y="5" width="2" height="1" fill="#8c8c8c"/><rect x="0" y="3" width="2" height="1" fill="#ffffff" opacity="0.7"/><rect x="1" y="8" width="1" height="1" fill="#c4c4c4"/><rect x="2" y="8" width="1" height="1" fill="#a0a0a0"/><rect x="1" y="9" width="2" height="1" fill="#8c8c8c"/><rect x="0" y="7" width="2" height="1" fill="#ffffff" opacity="0.7"/><rect x="1" y="12" width="1" height="1" fill="#c4c4c4"/><rect x="2" y="12" width="1" height="1" fill="#a0a0a0"/><rect x="1" y="13" width="2" height="1" fill="#8c8c8c"/><rect x="0" y="11" width="2" height="1" fill="#ffffff" opacity="0.7"/><rect x="1" y="16" width="1" height="1" fill="#c4c4c4"/><rect x="2" y="16" width="1" height="1" fill="#a0a0a0"/><rect x="1" y="17" width="2" height="1" fill="#8c8c8c"/><rect x="0" y="15" width="2" height="1" fill="#ffffff" opacity="0.7"/><rect x="1" y="20" width="1" height="1" fill="#c4c4c4"/><rect x="2" y="20" width="1" height="1" fill="#a0a0a0"/><rect x="1" y="21" width="2" height="1" fill="#8c8c8c"/><rect x="0" y="19" width="2" height="1" fill="#ffffff" opacity="0.7"/><rect x="1" y="24" width="1" height="1" fill="#c4c4c4"/><rect x="2" y="24" width="1" height="1" fill="#a0a0a0"/><rect x="1" y="25" width="2" height="1" fill="#8c8c8c"/><rect x="0" y="23" width="2" height="1" fill="#ffffff" opacity="0.7"/><rect x="1" y="28" width="1" height="1" fill="#c4c4c4"/><rect x="2" y="28" width="1" height="1" fill="#a0a0a0"/><rect x="1" y="29" width="2" height="1" fill="#8c8c8c"/><rect x="0" y="27" width="2" height="1" fill="#ffffff" opacity="0.7"/></svg><svg class="a" style="left:488px;top:61px;" width="24" height="24" viewBox="0 0 24 24"><defs><linearGradient id="gsb" x1="0" y1="0" x2="1" y2="1"><stop offset="0" stop-color="#ffffff"/><stop offset="1" stop-color="#e4e4e4"/></linearGradient></defs><rect x="0.6" y="0.6" width="22.8" height="22.8" rx="0.8" fill="url(#gsb)" stroke="#72a838" stroke-width="1.2"/><path d="M18.2 8 Q17 4 12 4 Q6.5 4 6.5 8 Q6.5 11 12 12 Q18.5 13 18.5 16.5 Q18.5 20.5 12 20.5 Q6.5 20.5 5.5 16.5" fill="none" stroke="#72a838" stroke-width="1.8" stroke-linecap="round"/></svg><div class="a" style="left:516px;top:58px;width:31px;height:29px;background:#e5f3ff;border:1px solid #cce8ff;border-radius:2px;"></div><svg class="a" style="left:519px;top:61px;" width="24" height="24" viewBox="0 0 24 24"><defs><linearGradient id="gar" x1="0" y1="0" x2="0" y2="1"><stop offset="0" stop-color="#76a83a"/><stop offset="1" stop-color="#3f7008"/></linearGradient></defs><path d="M3 12 H19.5 M12.5 3.5 L20.5 12 L12.5 20.5" fill="none" stroke="url(#gar)" stroke-width="4.6" stroke-linecap="round" stroke-linejoin="round"/></svg><svg class="a" style="left:550px;top:61px;" width="25" height="25" viewBox="0 0 25 25"><defs><linearGradient id="ggr" x1="0" y1="1" x2="1" y2="0"><stop offset="0" stop-color="#7e7e7e"/><stop offset="1" stop-color="#c4c4c4"/></linearGradient></defs><path d="M12.5 2 L22.2 12 L12.5 22 L2.8 12 Z" fill="url(#ggr)" stroke="url(#ggr)" stroke-width="3" stroke-linejoin="round"/><circle cx="7.5" cy="12.2" r="6.6" fill="#8e8e8e"/><g fill="#4e4e4e"><circle cx="6" cy="8.5" r="1.2"/><circle cx="10.5" cy="12" r="1.5"/><circle cx="5.5" cy="14.8" r="1.3"/><circle cx="3.5" cy="11" r="0.8"/><circle cx="9.5" cy="8" r="0.8"/><circle cx="12" cy="16.5" r="1.5"/></g><path d="M1.5 16.5 L4.5 20 M3.5 15.5 L6.5 19 M13 6 L14.5 7.5 M12 7.5 L14 9.5" stroke="#f4f4f4" stroke-width="1.2"/></svg><svg class="a" style="left:581px;top:61px;" width="25" height="25" viewBox="0 0 25 25"><defs><linearGradient id="ggr" x1="0" y1="1" x2="1" y2="0"><stop offset="0" stop-color="#7e7e7e"/><stop offset="1" stop-color="#c4c4c4"/></linearGradient></defs><path d="M12.5 2 L22.2 12 L12.5 22 L2.8 12 Z" fill="url(#ggr)" stroke="url(#ggr)" stroke-width="3" stroke-linejoin="round"/><circle cx="7.5" cy="12.2" r="6.6" fill="#8e8e8e"/><g fill="#4e4e4e"><circle cx="6" cy="8.5" r="1.2"/><circle cx="10.5" cy="12" r="1.5"/><circle cx="5.5" cy="14.8" r="1.3"/><circle cx="3.5" cy="11" r="0.8"/><circle cx="9.5" cy="8" r="0.8"/><circle cx="12" cy="16.5" r="1.5"/></g><path d="M1.5 16.5 L4.5 20 M3.5 15.5 L6.5 19 M13 6 L14.5 7.5 M12 7.5 L14 9.5" stroke="#f4f4f4" stroke-width="1.2"/></svg><svg class="a" style="left:612px;top:61px;" width="25" height="25" viewBox="0 0 25 25"><defs><linearGradient id="ggr" x1="0" y1="1" x2="1" y2="0"><stop offset="0" stop-color="#7e7e7e"/><stop offset="1" stop-color="#c4c4c4"/></linearGradient></defs><path d="M12.5 2 L22.2 12 L12.5 22 L2.8 12 Z" fill="url(#ggr)" stroke="url(#ggr)" stroke-width="3" stroke-linejoin="round"/><path d="M1.5 11 Q1.5 8 4 8 H8 V16 H4 Q1.5 16 1.5 13 Z" fill="#888"/><path d="M3 9.5 L10 5.5 L17 9.5 V18 L10 22 L3 18 Z" fill="#9a9a9a" stroke="#555" stroke-width="0.6"/><path d="M3 9.5 L10 13.5 L17 9.5 M10 13.5 V22" stroke="#444" stroke-width="0.6" fill="none"/><path d="M6.5 7.5 L13.5 7.5 L15 9.5 L10 12 L5 9.5 Z" fill="#e0e0e0"/><path d="M6 19 Q8 16.5 10 18.5 Q12 16.5 14 19 L10 21 Z" fill="#f2f2f2"/><path d="M1.5 18.5 L5 16.5" stroke="#eee" stroke-width="1"/></svg><div class="a" style="left:641px;top:57px;width:1px;height:32px;background:#c6c6c6;"></div><div class="a" style="left:642px;top:57px;width:1px;height:32px;background:#ffffff;"></div><svg class="a" style="left:645px;top:56px;" width="4" height="32" viewBox="0 0 4 32"><rect x="1" y="4" width="1" height="1" fill="#c4c4c4"/><rect x="2" y="4" width="1" height="1" fill="#a0a0a0"/><rect x="1" y="5" width="2" height="1" fill="#8c8c8c"/><rect x="0" y="3" width="2" height="1" fill="#ffffff" opacity="0.7"/><rect x="1" y="8" width="1" height="1" fill="#c4c4c4"/><rect x="2" y="8" width="1" height="1" fill="#a0a0a0"/><rect x="1" y="9" width="2" height="1" fill="#8c8c8c"/><rect x="0" y="7" width="2" height="1" fill="#ffffff" opacity="0.7"/><rect x="1" y="12" width="1" height="1" fill="#c4c4c4"/><rect x="2" y="12" width="1" height="1" fill="#a0a0a0"/><rect x="1" y="13" width="2" height="1" fill="#8c8c8c"/><rect x="0" y="11" width="2" height="1" fill="#ffffff" opacity="0.7"/><rect x="1" y="16" width="1" height="1" fill="#c4c4c4"/><rect x="2" y="16" width="1" height="1" fill="#a0a0a0"/><rect x="1" y="17" width="2" height="1" fill="#8c8c8c"/><rect x="0" y="15" width="2" height="1" fill="#ffffff" opacity="0.7"/><rect x="1" y="20" width="1" height="1" fill="#c4c4c4"/><rect x="2" y="20" width="1" height="1" fill="#a0a0a0"/><rect x="1" y="21" width="2" height="1" fill="#8c8c8c"/><rect x="0" y="19" width="2" height="1" fill="#ffffff" opacity="0.7"/><rect x="1" y="24" width="1" height="1" fill="#c4c4c4"/><rect x="2" y="24" width="1" height="1" fill="#a0a0a0"/><rect x="1" y="25" width="2" height="1" fill="#8c8c8c"/><rect x="0" y="23" width="2" height="1" fill="#ffffff" opacity="0.7"/><rect x="1" y="28" width="1" height="1" fill="#c4c4c4"/><rect x="2" y="28" width="1" height="1" fill="#a0a0a0"/><rect x="1" y="29" width="2" height="1" fill="#8c8c8c"/><rect x="0" y="27" width="2" height="1" fill="#ffffff" opacity="0.7"/></svg><svg class="a" style="left:656px;top:61px;" width="26" height="26" viewBox="0 0 26 26"><g fill="none" stroke="#333" stroke-width="0.9"><path d="M4 7 L6.5 5 L9 9 M8 4.5 L11 2.5 L13.5 6.5"/><path d="M19 16 L22 19 L19 22 M15.5 21 L17.5 24"/><path d="M18 4 L22 1 M19.5 5.5 L23 2.5"/></g><circle cx="18.5" cy="6.5" r="3.4" fill="#000"/><circle cx="11" cy="14" r="9" fill="#e60000"/><g fill="#000"><circle cx="8.8" cy="8.5" r="2"/><circle cx="14" cy="7.5" r="1.2"/><circle cx="17.2" cy="12.5" r="2.4"/><circle cx="5.5" cy="14.5" r="1.4"/><circle cx="9.5" cy="18.5" r="2"/><circle cx="14.6" cy="18" r="1.4"/></g></svg><svg class="a" style="left:688px;top:71px;" width="10" height="6" viewBox="0 0 10 6"><path d="M0 0 H9.5 L4.75 5.3 Z" fill="#000"/></svg><div class="a" style="left:701px;top:57px;width:1px;height:32px;background:#c6c6c6;"></div><div class="a" style="left:702px;top:57px;width:1px;height:32px;background:#ffffff;"></div><svg class="a" style="left:705px;top:56px;" width="4" height="32" viewBox="0 0 4 32"><rect x="1" y="4" width="1" height="1" fill="#c4c4c4"/><rect x="2" y="4" width="1" height="1" fill="#a0a0a0"/><rect x="1" y="5" width="2" height="1" fill="#8c8c8c"/><rect x="0" y="3" width="2" height="1" fill="#ffffff" opacity="0.7"/><rect x="1" y="8" width="1" height="1" fill="#c4c4c4"/><rect x="2" y="8" width="1" height="1" fill="#a0a0a0"/><rect x="1" y="9" width="2" height="1" fill="#8c8c8c"/><rect x="0" y="7" width="2" height="1" fill="#ffffff" opacity="0.7"/><rect x="1" y="12" width="1" height="1" fill="#c4c4c4"/><rect x="2" y="12" width="1" height="1" fill="#a0a0a0"/><rect x="1" y="13" width="2" height="1" fill="#8c8c8c"/><rect x="0" y="11" width="2" height="1" fill="#ffffff" opacity="0.7"/><rect x="1" y="16" width="1" height="1" fill="#c4c4c4"/><rect x="2" y="16" width="1" height="1" fill="#a0a0a0"/><rect x="1" y="17" width="2" height="1" fill="#8c8c8c"/><rect x="0" y="15" width="2" height="1" fill="#ffffff" opacity="0.7"/><rect x="1" y="20" width="1" height="1" fill="#c4c4c4"/><rect x="2" y="20" width="1" height="1" fill="#a0a0a0"/><rect x="1" y="21" width="2" height="1" fill="#8c8c8c"/><rect x="0" y="19" width="2" height="1" fill="#ffffff" opacity="0.7"/><rect x="1" y="24" width="1" height="1" fill="#c4c4c4"/><rect x="2" y="24" width="1" height="1" fill="#a0a0a0"/><rect x="1" y="25" width="2" height="1" fill="#8c8c8c"/><rect x="0" y="23" width="2" height="1" fill="#ffffff" opacity="0.7"/><rect x="1" y="28" width="1" height="1" fill="#c4c4c4"/><rect x="2" y="28" width="1" height="1" fill="#a0a0a0"/><rect x="1" y="29" width="2" height="1" fill="#8c8c8c"/><rect x="0" y="27" width="2" height="1" fill="#ffffff" opacity="0.7"/></svg><svg class="a" style="left:716px;top:60px;" width="26" height="26" viewBox="0 0 26 26"><path d="M3 11 V19 M3 15 H7 M22.5 11 V19 M18.5 15 H22.5" stroke="#000" stroke-width="2.4" stroke-linecap="round"/><rect x="7.3" y="5.2" width="10" height="18.6" rx="0.8" fill="#1d4bbf" stroke="#0a1a50" stroke-width="0.8"/><rect x="15" y="1.9" width="5" height="11.6" fill="#76ad22"/><rect x="10.7" y="6" width="13.6" height="3.8" fill="#76ad22"/></svg><div class="a" style="left:748px;top:61px;width:1px;height:25px;background:#d2d2d2;"></div><svg class="a" style="left:756px;top:62px;" width="22" height="22" viewBox="0 0 22 22"><defs><linearGradient id="gsq" x1="0" y1="1" x2="1" y2="0"><stop offset="0" stop-color="#8c8c8c"/><stop offset="0.32" stop-color="#8c8c8c"/><stop offset="0.33" stop-color="#a8a8a8"/><stop offset="0.62" stop-color="#a8a8a8"/><stop offset="0.63" stop-color="#8a8a8a"/><stop offset="1" stop-color="#8a8a8a"/></linearGradient></defs><rect x="0.5" y="0.5" width="21" height="21" rx="1.2" fill="url(#gsq)" stroke="#7c7c7c"/></svg><svg class="a" style="left:787px;top:62px;" width="22" height="22" viewBox="0 0 22 22"><rect x="0.5" y="0.5" width="21" height="21" rx="1.2" fill="url(#gsq)" stroke="#7c7c7c"/><path d="M13 3 L19.5 9.5 M19.5 3 L13 9.5" stroke="#b4b4b4" stroke-width="2.4" stroke-linecap="round"/></svg><div class="a" style="left:817px;top:61px;width:1px;height:25px;background:#d2d2d2;"></div><svg class="a" style="left:824px;top:61px;" width="24" height="24" viewBox="0 0 24 24"><path d="M0.8 5.7 L18 14.5 L0.8 23.2 Z" fill="#000080"/><rect x="14.3" y="0.8" width="4.6" height="11.7" fill="#76ad22"/><rect x="10.2" y="4.5" width="13" height="4" fill="#76ad22"/></svg><svg class="a" style="left:856px;top:61px;" width="24" height="24" viewBox="0 0 24 24"><g fill="#000080"><path d="M0.5 0.5 L6 3 L0.5 5.5 Z"/><path d="M0.5 9 L6 11.5 L0.5 14 Z"/><path d="M0.5 17.5 L6 20 L0.5 22.5 Z"/></g><path d="M5 3 H10.5 V20 H5 M5 11.5 H15.5" fill="none" stroke="#000080" stroke-width="1.2"/><rect x="15.3" y="7.7" width="7.2" height="7.2" fill="#43963c"/></svg><svg class="a" style="left:887px;top:61px;" width="24" height="24" viewBox="0 0 24 24"><g fill="#000080"><path d="M0.5 0.5 L6 3 L0.5 5.5 Z"/><path d="M0.5 9 L6 11.5 L0.5 14 Z"/><path d="M0.5 17.5 L6 20 L0.5 22.5 Z"/></g><path d="M5 3 H10.5 V20 H5 M5 11.5 H15.5" fill="none" stroke="#000080" stroke-width="1.2"/><rect x="15.3" y="7.7" width="7.2" height="7.2" fill="#6e6eff"/></svg><div class="a" style="left:917px;top:61px;width:1px;height:25px;background:#d2d2d2;"></div><svg class="a" style="left:924px;top:61px;" width="24" height="24" viewBox="0 0 24 24"><defs><linearGradient id="gfmu" x1="0" y1="0" x2="0" y2="1"><stop offset="0" stop-color="#f2f2f2"/><stop offset="0.55" stop-color="#e4e4e4"/><stop offset="1" stop-color="#b8b8b8"/></linearGradient></defs><rect x="0" y="0.5" width="24" height="23.5" fill="url(#gfmu)"/><text x="1.5" y="9.8" textLength="20" lengthAdjust="spacingAndGlyphs" font-family="Liberation Sans" font-weight="bold" font-size="11" fill="#000">FMU</text><path d="M6.5 16.5 L15 10.8 V22.2 Z" fill="#0a8a0a"/><rect x="14.5" y="14" width="9.5" height="5" fill="#0a8a0a"/></svg><svg class="a" style="left:2px;top:4px;" width="20" height="20" viewBox="0 0 20 20"><g transform="scale(1.0)"><path d="M16.50,3.60 L17.38,3.92 L17.14,4.90 L16.21,4.77 L15.77,5.37 L16.17,6.22 L15.30,6.74 L14.74,5.99 L14.00,6.10 L13.68,6.98 L12.70,6.74 L12.83,5.81 L12.23,5.37 L11.38,5.77 L10.86,4.90 L11.61,4.34 L11.50,3.60 L10.62,3.28 L10.86,2.30 L11.79,2.43 L12.23,1.83 L11.83,0.98 L12.70,0.46 L13.26,1.21 L14.00,1.10 L14.32,0.22 L15.30,0.46 L15.17,1.39 L15.77,1.83 L16.62,1.43 L17.14,2.30 L16.39,2.86 Z M15.20,3.60 A1.2,1.2 0 1,0 12.80,3.60 A1.2,1.2 0 1,0 15.20,3.60 Z" fill="#94a8e8" stroke="#2a3a80" stroke-width="0.45" fill-rule="evenodd"/><defs><linearGradient id="t0big" x1="1" y1="0" x2="0" y2="1"><stop offset="0" stop-color="#0a2aa8"/><stop offset="0.5" stop-color="#1a40c8"/><stop offset="0.55" stop-color="#9ab0f0"/><stop offset="1" stop-color="#b8c8f8"/></linearGradient></defs><path d="M16.41,12.65 L17.59,13.32 L17.08,14.55 L15.77,14.19 L15.11,14.97 L15.66,16.20 L14.53,16.89 L13.69,15.83 L12.69,16.07 L12.42,17.40 L11.09,17.29 L11.03,15.94 L10.09,15.54 L9.09,16.45 L8.07,15.59 L8.82,14.46 L8.29,13.59 L6.95,13.74 L6.64,12.44 L7.90,11.97 L7.99,10.95 L6.81,10.28 L7.32,9.05 L8.63,9.41 L9.29,8.63 L8.74,7.40 L9.87,6.71 L10.71,7.77 L11.71,7.53 L11.98,6.20 L13.31,6.31 L13.37,7.66 L14.31,8.06 L15.31,7.15 L16.33,8.01 L15.58,9.14 L16.11,10.01 L17.45,9.86 L17.76,11.16 L16.50,11.63 Z M14.30,11.80 A2.1,2.1 0 1,0 10.10,11.80 A2.1,2.1 0 1,0 14.30,11.80 Z" fill="url(#t0big)" fill-rule="evenodd"/><path d="M7.10,14.40 L8.09,14.73 L7.86,15.73 L6.83,15.62 L6.42,16.26 L6.97,17.15 L6.15,17.78 L5.43,17.02 L4.70,17.26 L4.55,18.28 L3.52,18.24 L3.46,17.20 L2.75,16.91 L1.97,17.60 L1.21,16.91 L1.83,16.07 L1.47,15.39 L0.44,15.42 L0.30,14.40 L1.31,14.16 L1.47,13.41 L0.66,12.76 L1.21,11.89 L2.14,12.36 L2.75,11.89 L2.54,10.87 L3.52,10.56 L3.94,11.51 L4.70,11.54 L5.20,10.63 L6.15,11.02 L5.86,12.02 L6.42,12.54 L7.39,12.15 L7.86,13.07 L7.00,13.64 Z M5.50,14.40 A1.3,1.3 0 1,0 2.90,14.40 A1.3,1.3 0 1,0 5.50,14.40 Z" fill="#1a58e0" stroke="#0a2a90" stroke-width="0.35" fill-rule="evenodd"/><circle cx="17.6" cy="17.1" r="1.9" fill="none" stroke="#0a2090" stroke-width="1.5"/></g></svg><svg class="a" style="left:297px;top:94px;" width="20" height="20" viewBox="0 0 20 20"><g transform="scale(1.0)"><path d="M16.50,3.60 L17.38,3.92 L17.14,4.90 L16.21,4.77 L15.77,5.37 L16.17,6.22 L15.30,6.74 L14.74,5.99 L14.00,6.10 L13.68,6.98 L12.70,6.74 L12.83,5.81 L12.23,5.37 L11.38,5.77 L10.86,4.90 L11.61,4.34 L11.50,3.60 L10.62,3.28 L10.86,2.30 L11.79,2.43 L12.23,1.83 L11.83,0.98 L12.70,0.46 L13.26,1.21 L14.00,1.10 L14.32,0.22 L15.30,0.46 L15.17,1.39 L15.77,1.83 L16.62,1.43 L17.14,2.30 L16.39,2.86 Z M15.20,3.60 A1.2,1.2 0 1,0 12.80,3.60 A1.2,1.2 0 1,0 15.20,3.60 Z" fill="#94a8e8" stroke="#2a3a80" stroke-width="0.45" fill-rule="evenodd"/><defs><linearGradient id="t1big" x1="1" y1="0" x2="0" y2="1"><stop offset="0" stop-color="#0a2aa8"/><stop offset="0.5" stop-color="#1a40c8"/><stop offset="0.55" stop-color="#9ab0f0"/><stop offset="1" stop-color="#b8c8f8"/></linearGradient></defs><path d="M16.41,12.65 L17.59,13.32 L17.08,14.55 L15.77,14.19 L15.11,14.97 L15.66,16.20 L14.53,16.89 L13.69,15.83 L12.69,16.07 L12.42,17.40 L11.09,17.29 L11.03,15.94 L10.09,15.54 L9.09,16.45 L8.07,15.59 L8.82,14.46 L8.29,13.59 L6.95,13.74 L6.64,12.44 L7.90,11.97 L7.99,10.95 L6.81,10.28 L7.32,9.05 L8.63,9.41 L9.29,8.63 L8.74,7.40 L9.87,6.71 L10.71,7.77 L11.71,7.53 L11.98,6.20 L13.31,6.31 L13.37,7.66 L14.31,8.06 L15.31,7.15 L16.33,8.01 L15.58,9.14 L16.11,10.01 L17.45,9.86 L17.76,11.16 L16.50,11.63 Z M14.30,11.80 A2.1,2.1 0 1,0 10.10,11.80 A2.1,2.1 0 1,0 14.30,11.80 Z" fill="url(#t1big)" fill-rule="evenodd"/><path d="M7.10,14.40 L8.09,14.73 L7.86,15.73 L6.83,15.62 L6.42,16.26 L6.97,17.15 L6.15,17.78 L5.43,17.02 L4.70,17.26 L4.55,18.28 L3.52,18.24 L3.46,17.20 L2.75,16.91 L1.97,17.60 L1.21,16.91 L1.83,16.07 L1.47,15.39 L0.44,15.42 L0.30,14.40 L1.31,14.16 L1.47,13.41 L0.66,12.76 L1.21,11.89 L2.14,12.36 L2.75,11.89 L2.54,10.87 L3.52,10.56 L3.94,11.51 L4.70,11.54 L5.20,10.63 L6.15,11.02 L5.86,12.02 L6.42,12.54 L7.39,12.15 L7.86,13.07 L7.00,13.64 Z M5.50,14.40 A1.3,1.3 0 1,0 2.90,14.40 A1.3,1.3 0 1,0 5.50,14.40 Z" fill="#1a58e0" stroke="#0a2a90" stroke-width="0.35" fill-rule="evenodd"/><circle cx="17.6" cy="17.1" r="1.9" fill="none" stroke="#0a2090" stroke-width="1.5"/></g></svg><svg class="a" style="left:1116px;top:93px;" width="20" height="20" viewBox="0 0 20 20"><g transform="scale(1.0)"><path d="M16.50,3.60 L17.38,3.92 L17.14,4.90 L16.21,4.77 L15.77,5.37 L16.17,6.22 L15.30,6.74 L14.74,5.99 L14.00,6.10 L13.68,6.98 L12.70,6.74 L12.83,5.81 L12.23,5.37 L11.38,5.77 L10.86,4.90 L11.61,4.34 L11.50,3.60 L10.62,3.28 L10.86,2.30 L11.79,2.43 L12.23,1.83 L11.83,0.98 L12.70,0.46 L13.26,1.21 L14.00,1.10 L14.32,0.22 L15.30,0.46 L15.17,1.39 L15.77,1.83 L16.62,1.43 L17.14,2.30 L16.39,2.86 Z M15.20,3.60 A1.2,1.2 0 1,0 12.80,3.60 A1.2,1.2 0 1,0 15.20,3.60 Z" fill="#94a8e8" stroke="#2a3a80" stroke-width="0.45" fill-rule="evenodd"/><defs><linearGradient id="t2big" x1="1" y1="0" x2="0" y2="1"><stop offset="0" stop-color="#0a2aa8"/><stop offset="0.5" stop-color="#1a40c8"/><stop offset="0.55" stop-color="#9ab0f0"/><stop offset="1" stop-color="#b8c8f8"/></linearGradient></defs><path d="M16.41,12.65 L17.59,13.32 L17.08,14.55 L15.77,14.19 L15.11,14.97 L15.66,16.20 L14.53,16.89 L13.69,15.83 L12.69,16.07 L12.42,17.40 L11.09,17.29 L11.03,15.94 L10.09,15.54 L9.09,16.45 L8.07,15.59 L8.82,14.46 L8.29,13.59 L6.95,13.74 L6.64,12.44 L7.90,11.97 L7.99,10.95 L6.81,10.28 L7.32,9.05 L8.63,9.41 L9.29,8.63 L8.74,7.40 L9.87,6.71 L10.71,7.77 L11.71,7.53 L11.98,6.20 L13.31,6.31 L13.37,7.66 L14.31,8.06 L15.31,7.15 L16.33,8.01 L15.58,9.14 L16.11,10.01 L17.45,9.86 L17.76,11.16 L16.50,11.63 Z M14.30,11.80 A2.1,2.1 0 1,0 10.10,11.80 A2.1,2.1 0 1,0 14.30,11.80 Z" fill="url(#t2big)" fill-rule="evenodd"/><path d="M7.10,14.40 L8.09,14.73 L7.86,15.73 L6.83,15.62 L6.42,16.26 L6.97,17.15 L6.15,17.78 L5.43,17.02 L4.70,17.26 L4.55,18.28 L3.52,18.24 L3.46,17.20 L2.75,16.91 L1.97,17.60 L1.21,16.91 L1.83,16.07 L1.47,15.39 L0.44,15.42 L0.30,14.40 L1.31,14.16 L1.47,13.41 L0.66,12.76 L1.21,11.89 L2.14,12.36 L2.75,11.89 L2.54,10.87 L3.52,10.56 L3.94,11.51 L4.70,11.54 L5.20,10.63 L6.15,11.02 L5.86,12.02 L6.42,12.54 L7.39,12.15 L7.86,13.07 L7.00,13.64 Z M5.50,14.40 A1.3,1.3 0 1,0 2.90,14.40 A1.3,1.3 0 1,0 5.50,14.40 Z" fill="#1a58e0" stroke="#0a2a90" stroke-width="0.35" fill-rule="evenodd"/><circle cx="17.6" cy="17.1" r="1.9" fill="none" stroke="#0a2090" stroke-width="1.5"/></g></svg><svg class="a" style="left:1068px;top:98px;" width="14" height="14" viewBox="0 0 14 14"><rect x="0.5" y="0.5" width="13" height="13" rx="2" fill="#c4c4c4" stroke="#9c9c9c"/><path d="M4 4 L10 10 M10 4 L4 10" stroke="#fff" stroke-width="2"/></svg><svg class="a" style="left:1886px;top:97px;" width="14" height="14" viewBox="0 0 14 14"><rect x="0.5" y="0.5" width="13" height="13" rx="2" fill="#e8764f" stroke="#d0503a"/><path d="M4 4 L10 10 M10 4 L4 10" stroke="#fff" stroke-width="2"/></svg><svg class="a" style="left:233px;top:97px;" width="12" height="12" viewBox="0 0 12 12"><rect x="3.5" y="0.5" width="7" height="6.5" fill="#cfcfcf" stroke="#333" stroke-width="1"/><rect x="3" y="0" width="8" height="2" fill="#333"/><rect x="0.5" y="4.5" width="7" height="6.5" fill="#e6e6e6" stroke="#333" stroke-width="1"/><rect x="0" y="4" width="8" height="2" fill="#333"/></svg><svg class="a" style="left:259px;top:98px;" width="11" height="11" viewBox="0 0 11 11"><path d="M1 1 L10 10 M10 1 L1 10" stroke="#333" stroke-width="1.8"/></svg><svg class="a" style="left:1874px;top:734px;" width="12" height="12" viewBox="0 0 12 12"><rect x="3.5" y="0.5" width="7" height="6.5" fill="#cfcfcf" stroke="#333" stroke-width="1"/><rect x="3" y="0" width="8" height="2" fill="#333"/><rect x="0.5" y="4.5" width="7" height="6.5" fill="#e6e6e6" stroke="#333" stroke-width="1"/><rect x="0" y="4" width="8" height="2" fill="#333"/></svg><svg class="a" style="left:1900px;top:735px;" width="11" height="11" viewBox="0 0 11 11"><path d="M1 1 L10 10 M10 1 L1 10" stroke="#333" stroke-width="1.8"/></svg><svg class="a" style="left:200px;top:120px;" width="20" height="18" viewBox="0 0 20 18"><path d="M4 1 H10 V8 H13 L7 16.5 L1 8 H4 Z" fill="#e0e0e0" stroke="#c0c0c0" stroke-width="0.8"/><g fill="#9c9c9c"><rect x="11" y="0.5" width="8.5" height="2"/><rect x="13" y="4.5" width="6.5" height="1.3"/><rect x="13" y="8" width="6.5" height="1.3"/><rect x="13" y="11.5" width="6.5" height="1.3"/><rect x="11" y="15" width="8.5" height="2"/></g></svg><svg class="a" style="left:227px;top:120px;" width="20" height="19" viewBox="0 0 20 19"><defs><linearGradient id="gyl" x1="0" y1="0" x2="1" y2="0"><stop offset="0" stop-color="#ffe000"/><stop offset="1" stop-color="#ffb000"/></linearGradient></defs><path d="M6.2 1.2 L11.5 9.5 H8.5 V16.5 H3.8 V9.5 H0.8 Z" fill="url(#gyl)" stroke="#d08a00" stroke-width="0.8"/><g fill="#1a3cb0"><rect x="10.7" y="1.4" width="8.5" height="2.4"/><rect x="13" y="5" width="6" height="1.2"/><rect x="13" y="8.6" width="6" height="1.2"/><rect x="13" y="12.2" width="6" height="1.2"/><rect x="10.7" y="15.8" width="8.5" height="2.4"/></g></svg><svg class="a" style="left:256px;top:120px;" width="17" height="18" viewBox="0 0 17 18"><path d="M4.2 1.2 H12.2 V7.5 H16 L8.2 16.8 L0.5 7.5 H4.2 Z" fill="url(#gyl)" stroke="#d08a00" stroke-width="0.8"/></svg><svg class="a" style="left:286px;top:124px;" width="22" height="20" viewBox="0 0 22 20"><path d="M2 6.5 V13.5 M2 10 H6 M20 6.5 V13.5 M16 10 H20" stroke="#000" stroke-width="2" stroke-linecap="round"/><rect x="6.5" y="1.3" width="9.2" height="17.4" rx="0.8" fill="#1e47bb" stroke="#0a1a40" stroke-width="0.8"/></svg><div class="a" style="left:311px;top:121px;width:27px;height:25px;background:#cce8ff;border:1px solid #99d1ff;border-radius:3px;"></div><svg class="a" style="left:315px;top:125px;" width="20" height="20" viewBox="0 0 20 20"><g transform="scale(0.97)"><path d="M16.50,3.60 L17.38,3.92 L17.14,4.90 L16.21,4.77 L15.77,5.37 L16.17,6.22 L15.30,6.74 L14.74,5.99 L14.00,6.10 L13.68,6.98 L12.70,6.74 L12.83,5.81 L12.23,5.37 L11.38,5.77 L10.86,4.90 L11.61,4.34 L11.50,3.60 L10.62,3.28 L10.86,2.30 L11.79,2.43 L12.23,1.83 L11.83,0.98 L12.70,0.46 L13.26,1.21 L14.00,1.10 L14.32,0.22 L15.30,0.46 L15.17,1.39 L15.77,1.83 L16.62,1.43 L17.14,2.30 L16.39,2.86 Z M15.20,3.60 A1.2,1.2 0 1,0 12.80,3.60 A1.2,1.2 0 1,0 15.20,3.60 Z" fill="#94a8e8" stroke="#2a3a80" stroke-width="0.45" fill-rule="evenodd"/><defs><linearGradient id="t3big" x1="1" y1="0" x2="0" y2="1"><stop offset="0" stop-color="#0a2aa8"/><stop offset="0.5" stop-color="#1a40c8"/><stop offset="0.55" stop-color="#9ab0f0"/><stop offset="1" stop-color="#b8c8f8"/></linearGradient></defs><path d="M16.41,12.65 L17.59,13.32 L17.08,14.55 L15.77,14.19 L15.11,14.97 L15.66,16.20 L14.53,16.89 L13.69,15.83 L12.69,16.07 L12.42,17.40 L11.09,17.29 L11.03,15.94 L10.09,15.54 L9.09,16.45 L8.07,15.59 L8.82,14.46 L8.29,13.59 L6.95,13.74 L6.64,12.44 L7.90,11.97 L7.99,10.95 L6.81,10.28 L7.32,9.05 L8.63,9.41 L9.29,8.63 L8.74,7.40 L9.87,6.71 L10.71,7.77 L11.71,7.53 L11.98,6.20 L13.31,6.31 L13.37,7.66 L14.31,8.06 L15.31,7.15 L16.33,8.01 L15.58,9.14 L16.11,10.01 L17.45,9.86 L17.76,11.16 L16.50,11.63 Z M14.30,11.80 A2.1,2.1 0 1,0 10.10,11.80 A2.1,2.1 0 1,0 14.30,11.80 Z" fill="url(#t3big)" fill-rule="evenodd"/><path d="M7.10,14.40 L8.09,14.73 L7.86,15.73 L6.83,15.62 L6.42,16.26 L6.97,17.15 L6.15,17.78 L5.43,17.02 L4.70,17.26 L4.55,18.28 L3.52,18.24 L3.46,17.20 L2.75,16.91 L1.97,17.60 L1.21,16.91 L1.83,16.07 L1.47,15.39 L0.44,15.42 L0.30,14.40 L1.31,14.16 L1.47,13.41 L0.66,12.76 L1.21,11.89 L2.14,12.36 L2.75,11.89 L2.54,10.87 L3.52,10.56 L3.94,11.51 L4.70,11.54 L5.20,10.63 L6.15,11.02 L5.86,12.02 L6.42,12.54 L7.39,12.15 L7.86,13.07 L7.00,13.64 Z M5.50,14.40 A1.3,1.3 0 1,0 2.90,14.40 A1.3,1.3 0 1,0 5.50,14.40 Z" fill="#1a58e0" stroke="#0a2a90" stroke-width="0.35" fill-rule="evenodd"/><circle cx="17.6" cy="17.1" r="1.9" fill="none" stroke="#0a2090" stroke-width="1.5"/></g></svg><svg class="a" style="left:341px;top:124px;" width="20" height="20" viewBox="0 0 20 20"><rect x="0.5" y="0.2" width="18.6" height="19.5" fill="#1e40b0"/><g stroke="#fff" stroke-width="1.4"><path d="M2.5 4.4 H16.5 M6 8.2 H16.5 M2.5 12 H13.5 M2.5 15.8 H16.5"/></g></svg><div class="a" style="left:369px;top:119px;width:1px;height:29px;background:#8f8f8f;"></div><div class="a t" style="left:375px;top:127.82px;font-family:'Liberation Sans';font-size:13px;line-height:13px;color:#000;font-weight:normal;transform:scaleX(1.0010);transform-origin:0 0;">Writable</div><div class="a" style="left:430px;top:119px;width:1px;height:29px;background:#8f8f8f;"></div><div class="a t" style="left:436.5px;top:127.82px;font-family:'Liberation Sans';font-size:13px;line-height:13px;color:#000;font-weight:normal;transform:scaleX(0.9791);transform-origin:0 0;">Diagram View</div><div class="a" style="left:523px;top:119px;width:1px;height:29px;background:#8f8f8f;"></div><div class="a t" style="left:529.5px;top:127.82px;font-family:'Liberation Sans';font-size:13px;line-height:13px;color:#000;font-weight:normal;transform:scaleX(0.9753);transform-origin:0 0;">D:/Model.ssp</div><div class="a" style="left:1890px;top:119px;width:1px;height:29px;background:#8f8f8f;"></div><svg class="a" style="left:1897px;top:125px;" width="16" height="18" viewBox="0 0 16 18"><rect x="2" y="8" width="13" height="9.6" rx="2.2" fill="#a6a6a6"/><path d="M4.8 8.5 V5.5 Q4.8 1.8 8.5 1.5" fill="none" stroke="#a6a6a6" stroke-width="1.8" stroke-linecap="round"/><path d="M8.5 10.5 V14" stroke="#e0e0e0" stroke-width="1.3"/></svg><svg class="a" style="left:1505px;top:986px;" width="30" height="30" viewBox="0 0 30 30"><ellipse cx="19.5" cy="21.5" rx="6.5" ry="3.3" fill="#3a3a3a"/><ellipse cx="12.4" cy="13.8" rx="6.3" ry="8.6" fill="#3e3e3e"/><ellipse cx="12.4" cy="13.8" rx="4.4" ry="6.4" fill="#6e6e6e"/><path d="M13 13 L14.5 9.5 L16 12 Z" fill="#ddd"/><path d="M16 12 L23 7.8" stroke="#2e2e2e" stroke-width="2.2"/><circle cx="23.3" cy="7.6" r="1.6" fill="#fff" stroke="#555" stroke-width="1.1"/></svg><svg class="a" style="left:1618px;top:992px;" width="20" height="20" viewBox="0 0 20 20"><g transform="scale(1.0)"><path d="M16.50,3.60 L17.38,3.92 L17.14,4.90 L16.21,4.77 L15.77,5.37 L16.17,6.22 L15.30,6.74 L14.74,5.99 L14.00,6.10 L13.68,6.98 L12.70,6.74 L12.83,5.81 L12.23,5.37 L11.38,5.77 L10.86,4.90 L11.61,4.34 L11.50,3.60 L10.62,3.28 L10.86,2.30 L11.79,2.43 L12.23,1.83 L11.83,0.98 L12.70,0.46 L13.26,1.21 L14.00,1.10 L14.32,0.22 L15.30,0.46 L15.17,1.39 L15.77,1.83 L16.62,1.43 L17.14,2.30 L16.39,2.86 Z M15.20,3.60 A1.2,1.2 0 1,0 12.80,3.60 A1.2,1.2 0 1,0 15.20,3.60 Z" fill="#94a8e8" stroke="#2a3a80" stroke-width="0.45" fill-rule="evenodd"/><defs><linearGradient id="t4big" x1="1" y1="0" x2="0" y2="1"><stop offset="0" stop-color="#0a2aa8"/><stop offset="0.5" stop-color="#1a40c8"/><stop offset="0.55" stop-color="#9ab0f0"/><stop offset="1" stop-color="#b8c8f8"/></linearGradient></defs><path d="M16.41,12.65 L17.59,13.32 L17.08,14.55 L15.77,14.19 L15.11,14.97 L15.66,16.20 L14.53,16.89 L13.69,15.83 L12.69,16.07 L12.42,17.40 L11.09,17.29 L11.03,15.94 L10.09,15.54 L9.09,16.45 L8.07,15.59 L8.82,14.46 L8.29,13.59 L6.95,13.74 L6.64,12.44 L7.90,11.97 L7.99,10.95 L6.81,10.28 L7.32,9.05 L8.63,9.41 L9.29,8.63 L8.74,7.40 L9.87,6.71 L10.71,7.77 L11.71,7.53 L11.98,6.20 L13.31,6.31 L13.37,7.66 L14.31,8.06 L15.31,7.15 L16.33,8.01 L15.58,9.14 L16.11,10.01 L17.45,9.86 L17.76,11.16 L16.50,11.63 Z M14.30,11.80 A2.1,2.1 0 1,0 10.10,11.80 A2.1,2.1 0 1,0 14.30,11.80 Z" fill="url(#t4big)" fill-rule="evenodd"/><path d="M7.10,14.40 L8.09,14.73 L7.86,15.73 L6.83,15.62 L6.42,16.26 L6.97,17.15 L6.15,17.78 L5.43,17.02 L4.70,17.26 L4.55,18.28 L3.52,18.24 L3.46,17.20 L2.75,16.91 L1.97,17.60 L1.21,16.91 L1.83,16.07 L1.47,15.39 L0.44,15.42 L0.30,14.40 L1.31,14.16 L1.47,13.41 L0.66,12.76 L1.21,11.89 L2.14,12.36 L2.75,11.89 L2.54,10.87 L3.52,10.56 L3.94,11.51 L4.70,11.54 L5.20,10.63 L6.15,11.02 L5.86,12.02 L6.42,12.54 L7.39,12.15 L7.86,13.07 L7.00,13.64 Z M5.50,14.40 A1.3,1.3 0 1,0 2.90,14.40 A1.3,1.3 0 1,0 5.50,14.40 Z" fill="#1a58e0" stroke="#0a2a90" stroke-width="0.35" fill-rule="evenodd"/><circle cx="17.6" cy="17.1" r="1.9" fill="none" stroke="#0a2090" stroke-width="1.5"/></g></svg><svg class="a" style="left:1723px;top:991px;" width="20" height="20" viewBox="0 0 20 20"><defs><linearGradient id="gpl" x1="0" y1="0" x2="0" y2="1"><stop offset="0" stop-color="#2a80ff"/><stop offset="1" stop-color="#1050c0"/></linearGradient></defs><rect x="0" y="0" width="20" height="19" rx="2.5" fill="url(#gpl)"/><path d="M1.5 9 L4 7 L6 10 L8 6 L10 9 L12 5 L14 9 L16 6 L18.5 9" fill="none" stroke="#cfe4ff" stroke-width="1"/><rect x="2" y="12.5" width="16" height="4" fill="#5a8ad8"/></svg><svg class="a" style="left:1818px;top:990px;" width="22" height="22" viewBox="0 0 22 22"><g fill="none" stroke="#333" stroke-width="0.9"><path d="M3 6 L5.5 4 L8 8 M7 3.5 L10 1.5 L12.5 5.5"/><path d="M17 15 L20 18 L17 21"/><path d="M16.5 3 L20.5 0.5"/></g><circle cx="16.5" cy="5.5" r="3" fill="#000"/><circle cx="10" cy="12.5" r="8" fill="#e60000"/><g fill="#000"><circle cx="8" cy="7.5" r="1.8"/><circle cx="15.5" cy="11" r="2.1"/><circle cx="5" cy="13" r="1.3"/><circle cx="8.6" cy="16.8" r="1.8"/><circle cx="13.2" cy="16.3" r="1.2"/></g></svg>
</body></html>
